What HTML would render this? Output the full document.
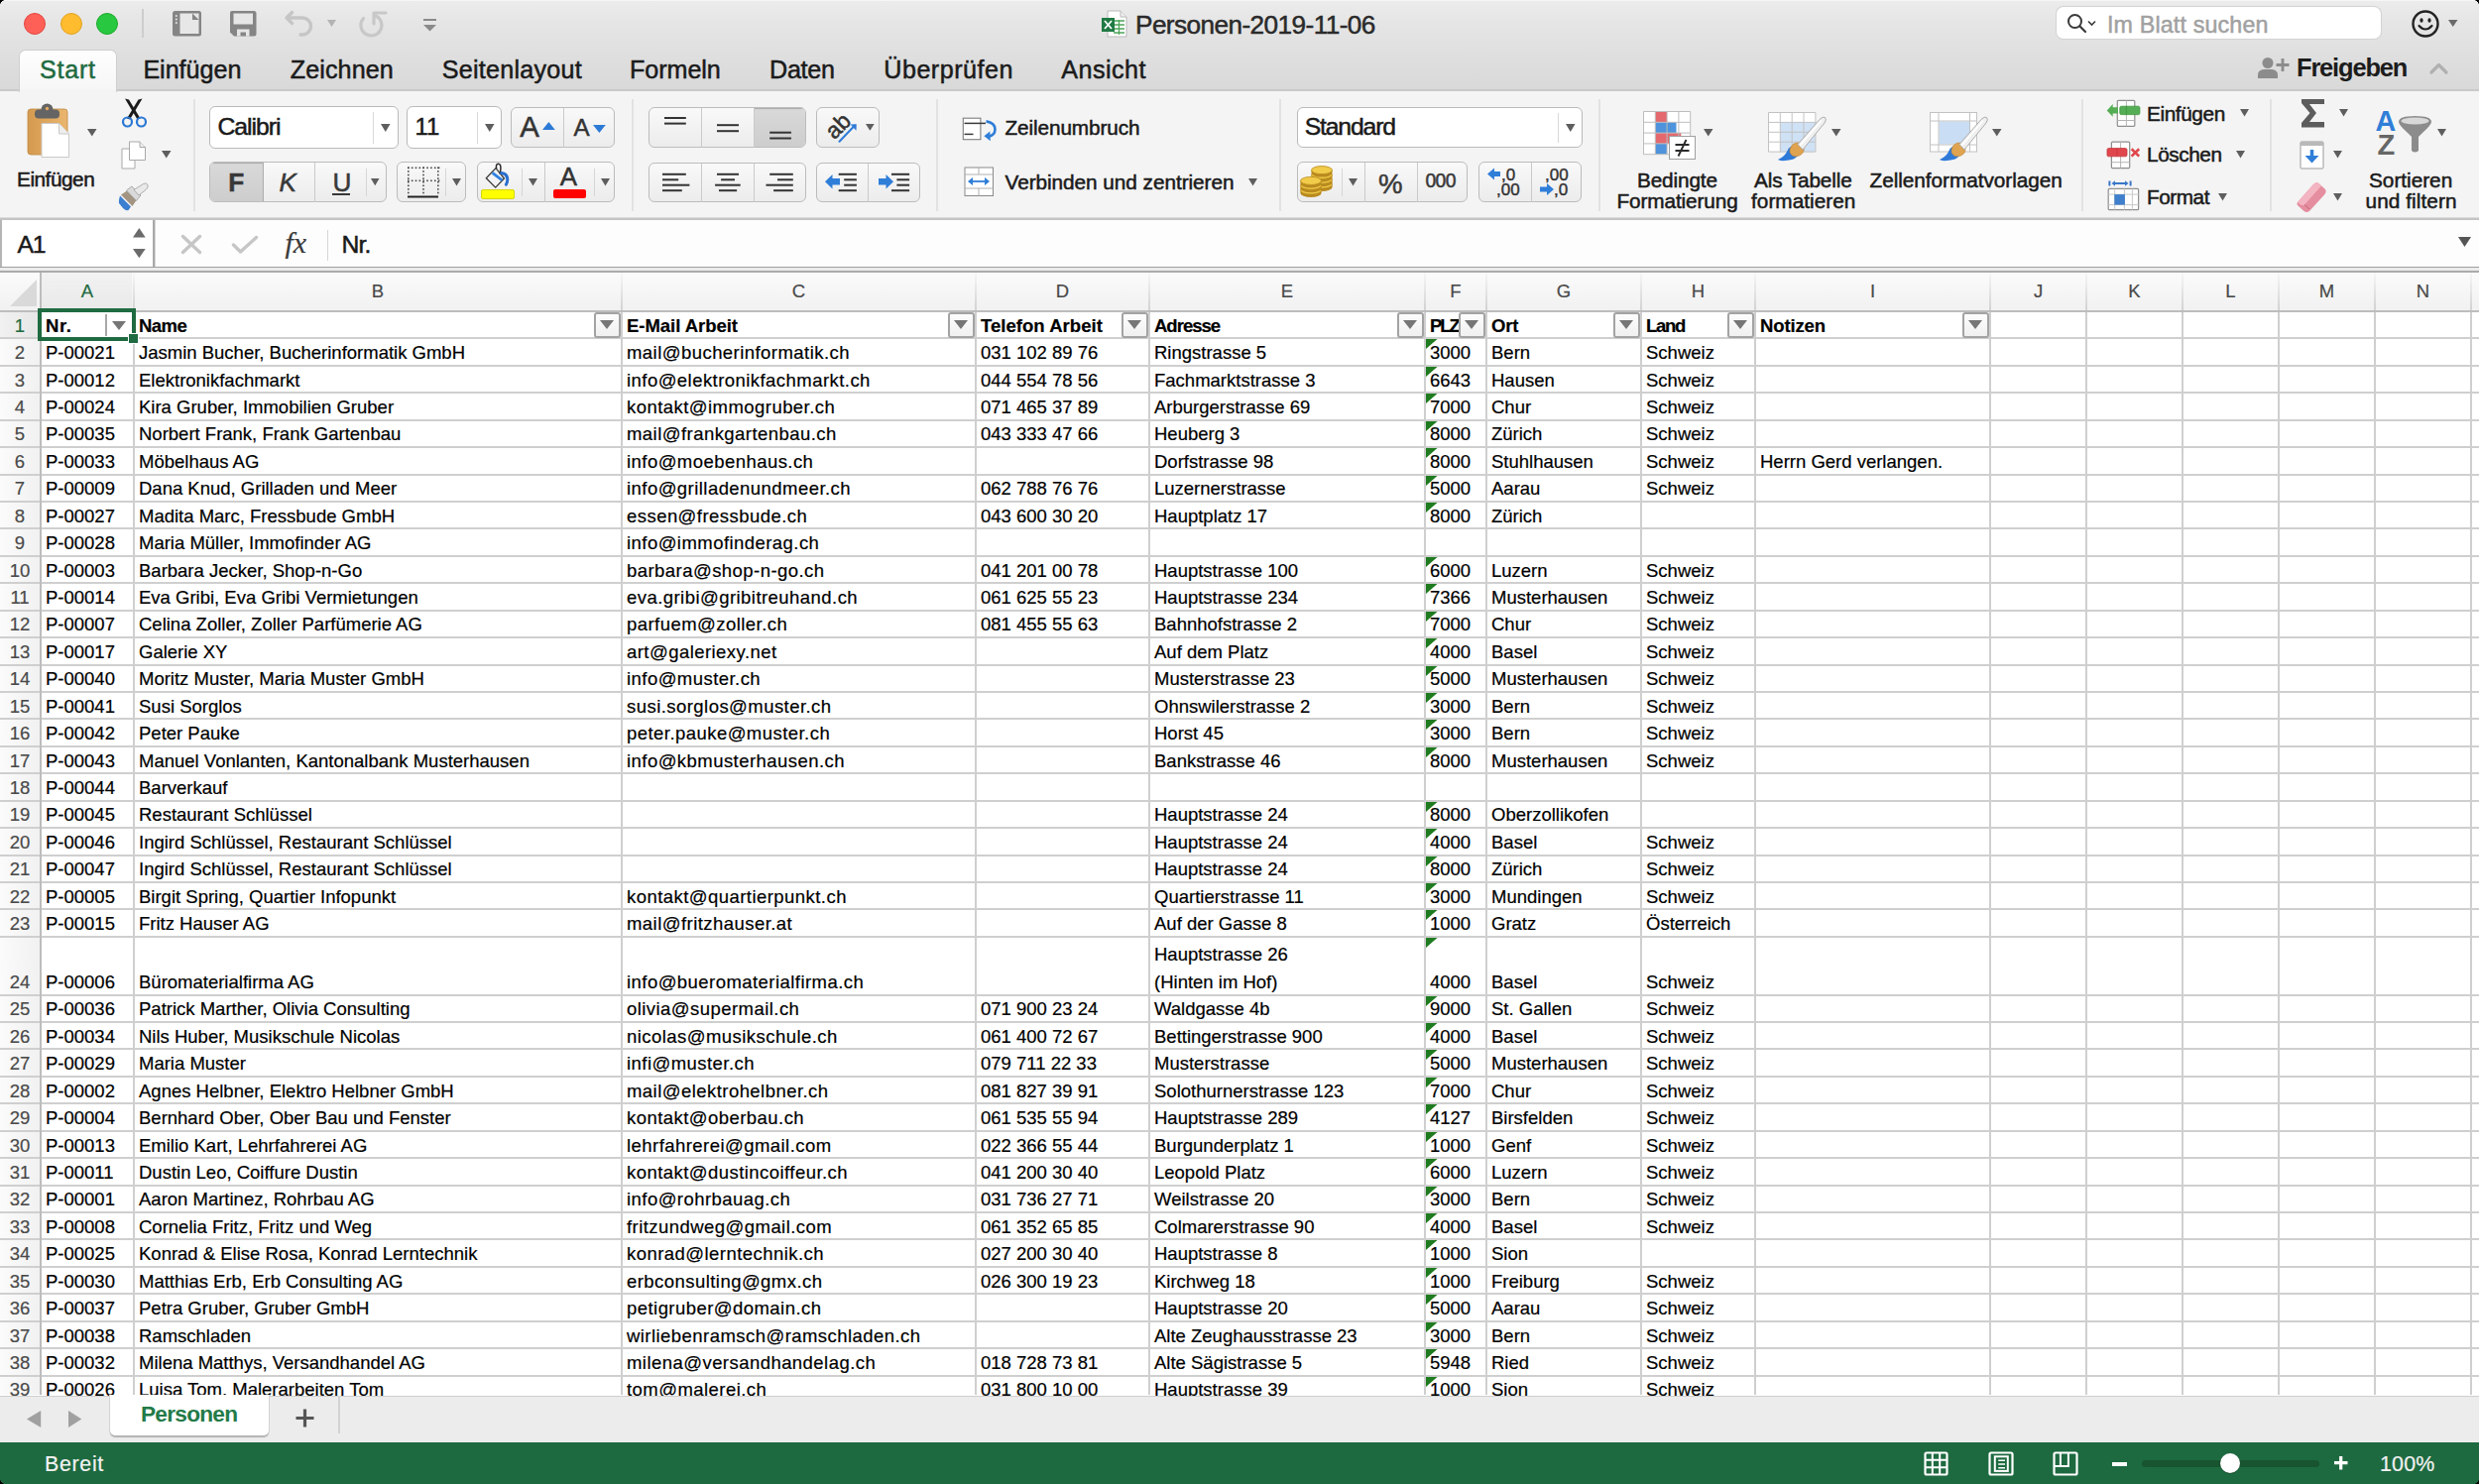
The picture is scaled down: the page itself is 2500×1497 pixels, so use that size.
<!DOCTYPE html>
<html><head><meta charset="utf-8"><title>Personen-2019-11-06</title>
<style>
html,body{margin:0;padding:0;}
body{width:2500px;height:1497px;position:relative;overflow:hidden;background:#fff;font-family:"Liberation Sans",sans-serif;}
.t{position:absolute;white-space:pre;line-height:1;font-family:"Liberation Sans",sans-serif;-webkit-text-stroke:0.5px currentColor;}
.c{-webkit-text-stroke:0.2px currentColor;}
svg{overflow:visible}
</style></head><body>
<div style="position:absolute;left:0px;top:0px;width:2500px;height:92px;background:linear-gradient(#ececec 0px,#e6e6e6 20px,#dedede 60px,#d9d9d9 91px);"></div>
<div style="position:absolute;left:0px;top:0px;width:2500px;height:1px;background:#f6f6f6;"></div>
<div style="position:absolute;left:0px;top:90px;width:2500px;height:2px;background:#c9c9c9;"></div>
<div style="position:absolute;left:0px;top:92px;width:2500px;height:128px;background:#f4f4f4;"></div>
<div style="position:absolute;left:0px;top:219px;width:2500px;height:1px;background:#dcdcdc;"></div>
<div style="position:absolute;left:0px;top:220px;width:2500px;height:2px;background:#c4c4c4;"></div>
<div style="position:absolute;left:0px;top:222px;width:2500px;height:47px;background:#fdfdfd;"></div>
<div style="position:absolute;left:0px;top:269px;width:2500px;height:1px;background:#9f9f9f;"></div>
<div style="position:absolute;left:0px;top:270px;width:2500px;height:3px;background:#ebebeb;"></div>
<div style="position:absolute;left:0px;top:273px;width:2500px;height:2px;background:#ababab;"></div>
<div style="position:absolute;left:24px;top:13px;width:20px;height:20px;border-radius:50%;background:#fe5f57;border:1px solid #e2463f;"></div>
<div style="position:absolute;left:60.5px;top:13px;width:20px;height:20px;border-radius:50%;background:#febc2e;border:1px solid #e1a325;"></div>
<div style="position:absolute;left:97px;top:13px;width:20px;height:20px;border-radius:50%;background:#28c840;border:1px solid #1aab29;"></div>
<div style="position:absolute;left:143px;top:9px;width:2px;height:29px;background:#cdcdcd;"></div>
<div style="position:absolute;left:20px;top:51px;width:97px;height:41px;background:linear-gradient(#fefefe,#f6f6f6);border-radius:6px 6px 0 0;box-shadow:0 0 0 1px #cfcfcf;"></div>
<div style="position:absolute;left:20px;top:90px;width:97px;height:3px;background:#f4f4f4;"></div>
<div class="t" style="left:40.0px;top:57.71px;font-size:25.15px;color:#1f6b41;letter-spacing:0.727px;">Start</div>
<div class="t" style="left:144.4px;top:57.71px;font-size:25.15px;color:#1a1a1a;letter-spacing:-0.036px;">Einfügen</div>
<div class="t" style="left:292.7px;top:57.71px;font-size:25.15px;color:#1a1a1a;letter-spacing:0.095px;">Zeichnen</div>
<div class="t" style="left:445.8px;top:57.71px;font-size:25.15px;color:#1a1a1a;letter-spacing:0.239px;">Seitenlayout</div>
<div class="t" style="left:635.0px;top:57.71px;font-size:25.15px;color:#1a1a1a;letter-spacing:-0.067px;">Formeln</div>
<div class="t" style="left:776.0px;top:57.71px;font-size:25.15px;color:#1a1a1a;letter-spacing:-0.273px;">Daten</div>
<div class="t" style="left:891.3px;top:57.71px;font-size:25.15px;color:#1a1a1a;letter-spacing:0.480px;">Überprüfen</div>
<div class="t" style="left:1070.3px;top:57.71px;font-size:25.15px;color:#1a1a1a;letter-spacing:0.458px;">Ansicht</div>
<div class="t" style="left:1145.0px;top:12.36px;font-size:26.16px;color:#2a2a2a;letter-spacing:-0.564px;">Personen-2019-11-06</div>
<div style="position:absolute;left:2074px;top:7px;width:327px;height:32px;background:#fff;border-radius:7px;box-shadow:0 0 0 1px #d3d3d3;"></div>
<div class="t" style="left:2125.0px;top:13.51px;font-size:23.26px;color:#a1a1a1;letter-spacing:0.154px;">Im Blatt suchen</div>
<div class="t" style="left:2316.0px;top:56.47px;font-size:25.44px;color:#1c1c1c;font-weight:700;letter-spacing:-1.158px;-webkit-text-stroke:0;">Freigeben</div>
<div class="t" style="left:17.0px;top:171.41px;font-size:20.78px;color:#1a1a1a;letter-spacing:-0.469px;">Einfügen</div>
<div class="t" style="left:1013.5px;top:119.41px;font-size:20.78px;color:#1a1a1a;letter-spacing:-0.105px;">Zeilenumbruch</div>
<div class="t" style="left:1013.5px;top:173.91px;font-size:20.78px;color:#1a1a1a;letter-spacing:-0.046px;">Verbinden und zentrieren</div>
<div class="t" style="left:1651.0px;top:171.61px;font-size:20.78px;color:#1a1a1a;letter-spacing:-0.141px;">Bedingte</div>
<div class="t" style="left:1630.5px;top:193.01px;font-size:20.78px;color:#1a1a1a;letter-spacing:-0.109px;">Formatierung</div>
<div class="t" style="left:1769.0px;top:171.61px;font-size:20.78px;color:#1a1a1a;letter-spacing:-0.125px;">Als Tabelle</div>
<div class="t" style="left:1766.0px;top:193.01px;font-size:20.78px;color:#1a1a1a;letter-spacing:0.037px;">formatieren</div>
<div class="t" style="left:1885.5px;top:171.71px;font-size:20.78px;color:#1a1a1a;letter-spacing:-0.041px;">Zellenformatvorlagen</div>
<div class="t" style="left:2165.0px;top:104.61px;font-size:20.78px;color:#1a1a1a;letter-spacing:-0.398px;">Einfügen</div>
<div class="t" style="left:2165.0px;top:146.41px;font-size:20.78px;color:#1a1a1a;letter-spacing:-0.419px;">Löschen</div>
<div class="t" style="left:2165.0px;top:188.61px;font-size:20.78px;color:#1a1a1a;letter-spacing:-0.473px;">Format</div>
<div class="t" style="left:2389.0px;top:172.41px;font-size:20.78px;color:#1a1a1a;letter-spacing:-0.008px;">Sortieren</div>
<div class="t" style="left:2385.5px;top:193.41px;font-size:20.78px;color:#1a1a1a;letter-spacing:0.080px;">und filtern</div>
<div style="position:absolute;left:0px;top:275px;width:2500px;height:1132px;background:#fff;"></div>
<div style="position:absolute;left:0px;top:275px;width:2500px;height:38px;background:linear-gradient(#fbfbfb,#f1f1f1);"></div>
<div style="position:absolute;left:42px;top:275px;width:91px;height:38px;background:linear-gradient(#f2f2f2,#e9e9e9);"></div>
<div style="position:absolute;left:0px;top:315px;width:40px;height:1092px;background:linear-gradient(90deg,#fbfbfb,#f1f1f1);"></div>
<div style="position:absolute;left:0px;top:315px;width:40px;height:25px;background:linear-gradient(90deg,#f1f1f1,#e6e6e6);"></div>
<svg style="position:absolute;left:10px;top:282px;" width="27" height="27" viewBox="0 0 27 27"><path d="M27 0 L27 27 L0 27 Z" fill="#d9d9d9"/></svg>
<div style="position:absolute;left:0;top:340px;width:2500px;height:2px;background:#cfcfcf"></div><div style="position:absolute;left:0;top:368px;width:2500px;height:2px;background:#cfcfcf"></div><div style="position:absolute;left:0;top:395px;width:2500px;height:2px;background:#cfcfcf"></div><div style="position:absolute;left:0;top:423px;width:2500px;height:2px;background:#cfcfcf"></div><div style="position:absolute;left:0;top:450px;width:2500px;height:2px;background:#cfcfcf"></div><div style="position:absolute;left:0;top:478px;width:2500px;height:2px;background:#cfcfcf"></div><div style="position:absolute;left:0;top:505px;width:2500px;height:2px;background:#cfcfcf"></div><div style="position:absolute;left:0;top:532px;width:2500px;height:2px;background:#cfcfcf"></div><div style="position:absolute;left:0;top:560px;width:2500px;height:2px;background:#cfcfcf"></div><div style="position:absolute;left:0;top:587px;width:2500px;height:2px;background:#cfcfcf"></div><div style="position:absolute;left:0;top:615px;width:2500px;height:2px;background:#cfcfcf"></div><div style="position:absolute;left:0;top:642px;width:2500px;height:2px;background:#cfcfcf"></div><div style="position:absolute;left:0;top:670px;width:2500px;height:2px;background:#cfcfcf"></div><div style="position:absolute;left:0;top:697px;width:2500px;height:2px;background:#cfcfcf"></div><div style="position:absolute;left:0;top:724px;width:2500px;height:2px;background:#cfcfcf"></div><div style="position:absolute;left:0;top:752px;width:2500px;height:2px;background:#cfcfcf"></div><div style="position:absolute;left:0;top:779px;width:2500px;height:2px;background:#cfcfcf"></div><div style="position:absolute;left:0;top:807px;width:2500px;height:2px;background:#cfcfcf"></div><div style="position:absolute;left:0;top:834px;width:2500px;height:2px;background:#cfcfcf"></div><div style="position:absolute;left:0;top:862px;width:2500px;height:2px;background:#cfcfcf"></div><div style="position:absolute;left:0;top:889px;width:2500px;height:2px;background:#cfcfcf"></div><div style="position:absolute;left:0;top:916px;width:2500px;height:2px;background:#cfcfcf"></div><div style="position:absolute;left:0;top:944px;width:2500px;height:2px;background:#cfcfcf"></div><div style="position:absolute;left:0;top:1003px;width:2500px;height:2px;background:#cfcfcf"></div><div style="position:absolute;left:0;top:1030px;width:2500px;height:2px;background:#cfcfcf"></div><div style="position:absolute;left:0;top:1057px;width:2500px;height:2px;background:#cfcfcf"></div><div style="position:absolute;left:0;top:1085px;width:2500px;height:2px;background:#cfcfcf"></div><div style="position:absolute;left:0;top:1112px;width:2500px;height:2px;background:#cfcfcf"></div><div style="position:absolute;left:0;top:1140px;width:2500px;height:2px;background:#cfcfcf"></div><div style="position:absolute;left:0;top:1167px;width:2500px;height:2px;background:#cfcfcf"></div><div style="position:absolute;left:0;top:1195px;width:2500px;height:2px;background:#cfcfcf"></div><div style="position:absolute;left:0;top:1222px;width:2500px;height:2px;background:#cfcfcf"></div><div style="position:absolute;left:0;top:1249px;width:2500px;height:2px;background:#cfcfcf"></div><div style="position:absolute;left:0;top:1277px;width:2500px;height:2px;background:#cfcfcf"></div><div style="position:absolute;left:0;top:1304px;width:2500px;height:2px;background:#cfcfcf"></div><div style="position:absolute;left:0;top:1332px;width:2500px;height:2px;background:#cfcfcf"></div><div style="position:absolute;left:0;top:1359px;width:2500px;height:2px;background:#cfcfcf"></div><div style="position:absolute;left:0;top:1387px;width:2500px;height:2px;background:#cfcfcf"></div>
<div style="position:absolute;left:0px;top:313px;width:2500px;height:2px;background:#bdbdbd;"></div>
<div style="position:absolute;left:40px;top:275px;width:2px;height:1132px;background:#bdbdbd;"></div>
<div style="position:absolute;left:134px;top:275px;width:2px;height:38px;background:linear-gradient(#f6f6f6,#d2d2d2);"></div>
<div style="position:absolute;left:134px;top:315px;width:2px;height:1092px;background:#cfcfcf;"></div>
<div style="position:absolute;left:626px;top:275px;width:2px;height:38px;background:linear-gradient(#f6f6f6,#d2d2d2);"></div>
<div style="position:absolute;left:626px;top:315px;width:2px;height:1092px;background:#cfcfcf;"></div>
<div style="position:absolute;left:983px;top:275px;width:2px;height:38px;background:linear-gradient(#f6f6f6,#d2d2d2);"></div>
<div style="position:absolute;left:983px;top:315px;width:2px;height:1092px;background:#cfcfcf;"></div>
<div style="position:absolute;left:1158px;top:275px;width:2px;height:38px;background:linear-gradient(#f6f6f6,#d2d2d2);"></div>
<div style="position:absolute;left:1158px;top:315px;width:2px;height:1092px;background:#cfcfcf;"></div>
<div style="position:absolute;left:1436px;top:275px;width:2px;height:38px;background:linear-gradient(#f6f6f6,#d2d2d2);"></div>
<div style="position:absolute;left:1436px;top:315px;width:2px;height:1092px;background:#cfcfcf;"></div>
<div style="position:absolute;left:1498px;top:275px;width:2px;height:38px;background:linear-gradient(#f6f6f6,#d2d2d2);"></div>
<div style="position:absolute;left:1498px;top:315px;width:2px;height:1092px;background:#cfcfcf;"></div>
<div style="position:absolute;left:1654px;top:275px;width:2px;height:38px;background:linear-gradient(#f6f6f6,#d2d2d2);"></div>
<div style="position:absolute;left:1654px;top:315px;width:2px;height:1092px;background:#cfcfcf;"></div>
<div style="position:absolute;left:1769px;top:275px;width:2px;height:38px;background:linear-gradient(#f6f6f6,#d2d2d2);"></div>
<div style="position:absolute;left:1769px;top:315px;width:2px;height:1092px;background:#cfcfcf;"></div>
<div style="position:absolute;left:2006px;top:275px;width:2px;height:38px;background:linear-gradient(#f6f6f6,#d2d2d2);"></div>
<div style="position:absolute;left:2006px;top:315px;width:2px;height:1092px;background:#cfcfcf;"></div>
<div style="position:absolute;left:2103px;top:275px;width:2px;height:38px;background:linear-gradient(#f6f6f6,#d2d2d2);"></div>
<div style="position:absolute;left:2103px;top:315px;width:2px;height:1092px;background:#cfcfcf;"></div>
<div style="position:absolute;left:2200px;top:275px;width:2px;height:38px;background:linear-gradient(#f6f6f6,#d2d2d2);"></div>
<div style="position:absolute;left:2200px;top:315px;width:2px;height:1092px;background:#cfcfcf;"></div>
<div style="position:absolute;left:2297px;top:275px;width:2px;height:38px;background:linear-gradient(#f6f6f6,#d2d2d2);"></div>
<div style="position:absolute;left:2297px;top:315px;width:2px;height:1092px;background:#cfcfcf;"></div>
<div style="position:absolute;left:2394px;top:275px;width:2px;height:38px;background:linear-gradient(#f6f6f6,#d2d2d2);"></div>
<div style="position:absolute;left:2394px;top:315px;width:2px;height:1092px;background:#cfcfcf;"></div>
<div style="position:absolute;left:2491px;top:275px;width:2px;height:38px;background:linear-gradient(#f6f6f6,#d2d2d2);"></div>
<div style="position:absolute;left:2491px;top:315px;width:2px;height:1092px;background:#cfcfcf;"></div>
<div class="t c" style="left:58.0px;width:60px;text-align:center;top:285.34px;font-size:18.5px;color:#1f6b41">A</div>
<div class="t c" style="left:351.0px;width:60px;text-align:center;top:285.34px;font-size:18.5px;color:#4a4a4a">B</div>
<div class="t c" style="left:775.5px;width:60px;text-align:center;top:285.34px;font-size:18.5px;color:#4a4a4a">C</div>
<div class="t c" style="left:1041.5px;width:60px;text-align:center;top:285.34px;font-size:18.5px;color:#4a4a4a">D</div>
<div class="t c" style="left:1268.0px;width:60px;text-align:center;top:285.34px;font-size:18.5px;color:#4a4a4a">E</div>
<div class="t c" style="left:1438.0px;width:60px;text-align:center;top:285.34px;font-size:18.5px;color:#4a4a4a">F</div>
<div class="t c" style="left:1547.0px;width:60px;text-align:center;top:285.34px;font-size:18.5px;color:#4a4a4a">G</div>
<div class="t c" style="left:1682.5px;width:60px;text-align:center;top:285.34px;font-size:18.5px;color:#4a4a4a">H</div>
<div class="t c" style="left:1858.5px;width:60px;text-align:center;top:285.34px;font-size:18.5px;color:#4a4a4a">I</div>
<div class="t c" style="left:2025.5px;width:60px;text-align:center;top:285.34px;font-size:18.5px;color:#4a4a4a">J</div>
<div class="t c" style="left:2122.5px;width:60px;text-align:center;top:285.34px;font-size:18.5px;color:#4a4a4a">K</div>
<div class="t c" style="left:2219.5px;width:60px;text-align:center;top:285.34px;font-size:18.5px;color:#4a4a4a">L</div>
<div class="t c" style="left:2316.5px;width:60px;text-align:center;top:285.34px;font-size:18.5px;color:#4a4a4a">M</div>
<div class="t c" style="left:2413.5px;width:60px;text-align:center;top:285.34px;font-size:18.5px;color:#4a4a4a">N</div>
<div class="t c" style="left:0px;width:40px;text-align:center;top:319.74px;font-size:18.5px;color:#1f6b41">1</div>
<div class="t c" style="left:0px;width:40px;text-align:center;top:347.17px;font-size:18.5px;color:#4a4a4a">2</div>
<div class="t c" style="left:0px;width:40px;text-align:center;top:374.60px;font-size:18.5px;color:#4a4a4a">3</div>
<div class="t c" style="left:0px;width:40px;text-align:center;top:402.03px;font-size:18.5px;color:#4a4a4a">4</div>
<div class="t c" style="left:0px;width:40px;text-align:center;top:429.46px;font-size:18.5px;color:#4a4a4a">5</div>
<div class="t c" style="left:0px;width:40px;text-align:center;top:456.89px;font-size:18.5px;color:#4a4a4a">6</div>
<div class="t c" style="left:0px;width:40px;text-align:center;top:484.32px;font-size:18.5px;color:#4a4a4a">7</div>
<div class="t c" style="left:0px;width:40px;text-align:center;top:511.75px;font-size:18.5px;color:#4a4a4a">8</div>
<div class="t c" style="left:0px;width:40px;text-align:center;top:539.18px;font-size:18.5px;color:#4a4a4a">9</div>
<div class="t c" style="left:0px;width:40px;text-align:center;top:566.61px;font-size:18.5px;color:#4a4a4a">10</div>
<div class="t c" style="left:0px;width:40px;text-align:center;top:594.04px;font-size:18.5px;color:#4a4a4a">11</div>
<div class="t c" style="left:0px;width:40px;text-align:center;top:621.47px;font-size:18.5px;color:#4a4a4a">12</div>
<div class="t c" style="left:0px;width:40px;text-align:center;top:648.90px;font-size:18.5px;color:#4a4a4a">13</div>
<div class="t c" style="left:0px;width:40px;text-align:center;top:676.33px;font-size:18.5px;color:#4a4a4a">14</div>
<div class="t c" style="left:0px;width:40px;text-align:center;top:703.76px;font-size:18.5px;color:#4a4a4a">15</div>
<div class="t c" style="left:0px;width:40px;text-align:center;top:731.19px;font-size:18.5px;color:#4a4a4a">16</div>
<div class="t c" style="left:0px;width:40px;text-align:center;top:758.62px;font-size:18.5px;color:#4a4a4a">17</div>
<div class="t c" style="left:0px;width:40px;text-align:center;top:786.05px;font-size:18.5px;color:#4a4a4a">18</div>
<div class="t c" style="left:0px;width:40px;text-align:center;top:813.48px;font-size:18.5px;color:#4a4a4a">19</div>
<div class="t c" style="left:0px;width:40px;text-align:center;top:840.91px;font-size:18.5px;color:#4a4a4a">20</div>
<div class="t c" style="left:0px;width:40px;text-align:center;top:868.34px;font-size:18.5px;color:#4a4a4a">21</div>
<div class="t c" style="left:0px;width:40px;text-align:center;top:895.77px;font-size:18.5px;color:#4a4a4a">22</div>
<div class="t c" style="left:0px;width:40px;text-align:center;top:923.20px;font-size:18.5px;color:#4a4a4a">23</div>
<div class="t c" style="left:0px;width:40px;text-align:center;top:981.94px;font-size:18.5px;color:#4a4a4a">24</div>
<div class="t c" style="left:0px;width:40px;text-align:center;top:1009.37px;font-size:18.5px;color:#4a4a4a">25</div>
<div class="t c" style="left:0px;width:40px;text-align:center;top:1036.80px;font-size:18.5px;color:#4a4a4a">26</div>
<div class="t c" style="left:0px;width:40px;text-align:center;top:1064.23px;font-size:18.5px;color:#4a4a4a">27</div>
<div class="t c" style="left:0px;width:40px;text-align:center;top:1091.66px;font-size:18.5px;color:#4a4a4a">28</div>
<div class="t c" style="left:0px;width:40px;text-align:center;top:1119.09px;font-size:18.5px;color:#4a4a4a">29</div>
<div class="t c" style="left:0px;width:40px;text-align:center;top:1146.52px;font-size:18.5px;color:#4a4a4a">30</div>
<div class="t c" style="left:0px;width:40px;text-align:center;top:1173.95px;font-size:18.5px;color:#4a4a4a">31</div>
<div class="t c" style="left:0px;width:40px;text-align:center;top:1201.38px;font-size:18.5px;color:#4a4a4a">32</div>
<div class="t c" style="left:0px;width:40px;text-align:center;top:1228.81px;font-size:18.5px;color:#4a4a4a">33</div>
<div class="t c" style="left:0px;width:40px;text-align:center;top:1256.24px;font-size:18.5px;color:#4a4a4a">34</div>
<div class="t c" style="left:0px;width:40px;text-align:center;top:1283.67px;font-size:18.5px;color:#4a4a4a">35</div>
<div class="t c" style="left:0px;width:40px;text-align:center;top:1311.10px;font-size:18.5px;color:#4a4a4a">36</div>
<div class="t c" style="left:0px;width:40px;text-align:center;top:1338.53px;font-size:18.5px;color:#4a4a4a">37</div>
<div class="t c" style="left:0px;width:40px;text-align:center;top:1365.96px;font-size:18.5px;color:#4a4a4a">38</div>
<div class="t c" style="left:0px;width:40px;text-align:center;top:1393.39px;font-size:18.5px;color:#4a4a4a">39</div>
<div class="t c" style="left:46px;top:319.74px;font-size:18.5px;color:#000;font-weight:700;letter-spacing:0.606px;">Nr.</div>
<div class="t c" style="left:140px;top:319.74px;font-size:18.5px;color:#000;font-weight:700;letter-spacing:-0.564px;">Name</div>
<div class="t c" style="left:632px;top:319.74px;font-size:18.5px;color:#000;font-weight:700;letter-spacing:-0.033px;">E-Mail Arbeit</div>
<div class="t c" style="left:989px;top:319.74px;font-size:18.5px;color:#000;font-weight:700;letter-spacing:0.037px;">Telefon Arbeit</div>
<div class="t c" style="left:1164px;top:319.74px;font-size:18.5px;color:#000;font-weight:700;letter-spacing:-0.986px;">Adresse</div>
<div class="t c" style="left:1442px;top:319.74px;font-size:18.5px;color:#000;font-weight:700;letter-spacing:-2.027px;">PLZ</div>
<div class="t c" style="left:1504px;top:319.74px;font-size:18.5px;color:#000;font-weight:700;letter-spacing:-0.175px;">Ort</div>
<div class="t c" style="left:1660px;top:319.74px;font-size:18.5px;color:#000;font-weight:700;letter-spacing:-1.334px;">Land</div>
<div class="t c" style="left:1775px;top:319.74px;font-size:18.5px;color:#000;font-weight:700;letter-spacing:-0.119px;">Notizen</div>
<div class="t c" style="left:46px;top:347.17px;font-size:18.5px;color:#000;">P-00021</div>
<div class="t c" style="left:140px;top:347.17px;font-size:18.5px;color:#000;">Jasmin Bucher, Bucherinformatik GmbH</div>
<div class="t c" style="left:632px;top:347.17px;font-size:18.5px;color:#000;letter-spacing:0.45px;">mail@bucherinformatik.ch</div>
<div class="t c" style="left:989px;top:347.17px;font-size:18.5px;color:#000;">031 102 89 76</div>
<div class="t c" style="left:1164px;top:347.17px;font-size:18.5px;color:#000;">Ringstrasse 5</div>
<div class="t c" style="left:1442px;top:347.17px;font-size:18.5px;color:#000;">3000</div>
<div class="t c" style="left:1504px;top:347.17px;font-size:18.5px;color:#000;">Bern</div>
<div class="t c" style="left:1660px;top:347.17px;font-size:18.5px;color:#000;">Schweiz</div>
<svg style="position:absolute;left:1438px;top:342px" width="12" height="10"><path d="M0 0 L11.5 0 L0 10 Z" fill="#1f7b1f"/></svg>
<div class="t c" style="left:46px;top:374.60px;font-size:18.5px;color:#000;">P-00012</div>
<div class="t c" style="left:140px;top:374.60px;font-size:18.5px;color:#000;">Elektronikfachmarkt</div>
<div class="t c" style="left:632px;top:374.60px;font-size:18.5px;color:#000;letter-spacing:0.45px;">info@elektronikfachmarkt.ch</div>
<div class="t c" style="left:989px;top:374.60px;font-size:18.5px;color:#000;">044 554 78 56</div>
<div class="t c" style="left:1164px;top:374.60px;font-size:18.5px;color:#000;">Fachmarktstrasse 3</div>
<div class="t c" style="left:1442px;top:374.60px;font-size:18.5px;color:#000;">6643</div>
<div class="t c" style="left:1504px;top:374.60px;font-size:18.5px;color:#000;">Hausen</div>
<div class="t c" style="left:1660px;top:374.60px;font-size:18.5px;color:#000;">Schweiz</div>
<svg style="position:absolute;left:1438px;top:370px" width="12" height="10"><path d="M0 0 L11.5 0 L0 10 Z" fill="#1f7b1f"/></svg>
<div class="t c" style="left:46px;top:402.03px;font-size:18.5px;color:#000;">P-00024</div>
<div class="t c" style="left:140px;top:402.03px;font-size:18.5px;color:#000;">Kira Gruber, Immobilien Gruber</div>
<div class="t c" style="left:632px;top:402.03px;font-size:18.5px;color:#000;letter-spacing:0.45px;">kontakt@immogruber.ch</div>
<div class="t c" style="left:989px;top:402.03px;font-size:18.5px;color:#000;">071 465 37 89</div>
<div class="t c" style="left:1164px;top:402.03px;font-size:18.5px;color:#000;">Arburgerstrasse 69</div>
<div class="t c" style="left:1442px;top:402.03px;font-size:18.5px;color:#000;">7000</div>
<div class="t c" style="left:1504px;top:402.03px;font-size:18.5px;color:#000;">Chur</div>
<div class="t c" style="left:1660px;top:402.03px;font-size:18.5px;color:#000;">Schweiz</div>
<svg style="position:absolute;left:1438px;top:397px" width="12" height="10"><path d="M0 0 L11.5 0 L0 10 Z" fill="#1f7b1f"/></svg>
<div class="t c" style="left:46px;top:429.46px;font-size:18.5px;color:#000;">P-00035</div>
<div class="t c" style="left:140px;top:429.46px;font-size:18.5px;color:#000;">Norbert Frank, Frank Gartenbau</div>
<div class="t c" style="left:632px;top:429.46px;font-size:18.5px;color:#000;letter-spacing:0.45px;">mail@frankgartenbau.ch</div>
<div class="t c" style="left:989px;top:429.46px;font-size:18.5px;color:#000;">043 333 47 66</div>
<div class="t c" style="left:1164px;top:429.46px;font-size:18.5px;color:#000;">Heuberg 3</div>
<div class="t c" style="left:1442px;top:429.46px;font-size:18.5px;color:#000;">8000</div>
<div class="t c" style="left:1504px;top:429.46px;font-size:18.5px;color:#000;">Zürich</div>
<div class="t c" style="left:1660px;top:429.46px;font-size:18.5px;color:#000;">Schweiz</div>
<svg style="position:absolute;left:1438px;top:425px" width="12" height="10"><path d="M0 0 L11.5 0 L0 10 Z" fill="#1f7b1f"/></svg>
<div class="t c" style="left:46px;top:456.89px;font-size:18.5px;color:#000;">P-00033</div>
<div class="t c" style="left:140px;top:456.89px;font-size:18.5px;color:#000;">Möbelhaus AG</div>
<div class="t c" style="left:632px;top:456.89px;font-size:18.5px;color:#000;letter-spacing:0.45px;">info@moebenhaus.ch</div>
<div class="t c" style="left:1164px;top:456.89px;font-size:18.5px;color:#000;">Dorfstrasse 98</div>
<div class="t c" style="left:1442px;top:456.89px;font-size:18.5px;color:#000;">8000</div>
<div class="t c" style="left:1504px;top:456.89px;font-size:18.5px;color:#000;">Stuhlhausen</div>
<div class="t c" style="left:1660px;top:456.89px;font-size:18.5px;color:#000;">Schweiz</div>
<div class="t c" style="left:1775px;top:456.89px;font-size:18.5px;color:#000;">Herrn Gerd verlangen.</div>
<svg style="position:absolute;left:1438px;top:452px" width="12" height="10"><path d="M0 0 L11.5 0 L0 10 Z" fill="#1f7b1f"/></svg>
<div class="t c" style="left:46px;top:484.32px;font-size:18.5px;color:#000;">P-00009</div>
<div class="t c" style="left:140px;top:484.32px;font-size:18.5px;color:#000;">Dana Knud, Grilladen und Meer</div>
<div class="t c" style="left:632px;top:484.32px;font-size:18.5px;color:#000;letter-spacing:0.45px;">info@grilladenundmeer.ch</div>
<div class="t c" style="left:989px;top:484.32px;font-size:18.5px;color:#000;">062 788 76 76</div>
<div class="t c" style="left:1164px;top:484.32px;font-size:18.5px;color:#000;">Luzernerstrasse</div>
<div class="t c" style="left:1442px;top:484.32px;font-size:18.5px;color:#000;">5000</div>
<div class="t c" style="left:1504px;top:484.32px;font-size:18.5px;color:#000;">Aarau</div>
<div class="t c" style="left:1660px;top:484.32px;font-size:18.5px;color:#000;">Schweiz</div>
<svg style="position:absolute;left:1438px;top:480px" width="12" height="10"><path d="M0 0 L11.5 0 L0 10 Z" fill="#1f7b1f"/></svg>
<div class="t c" style="left:46px;top:511.75px;font-size:18.5px;color:#000;">P-00027</div>
<div class="t c" style="left:140px;top:511.75px;font-size:18.5px;color:#000;">Madita Marc, Fressbude GmbH</div>
<div class="t c" style="left:632px;top:511.75px;font-size:18.5px;color:#000;letter-spacing:0.45px;">essen@fressbude.ch</div>
<div class="t c" style="left:989px;top:511.75px;font-size:18.5px;color:#000;">043 600 30 20</div>
<div class="t c" style="left:1164px;top:511.75px;font-size:18.5px;color:#000;">Hauptplatz 17</div>
<div class="t c" style="left:1442px;top:511.75px;font-size:18.5px;color:#000;">8000</div>
<div class="t c" style="left:1504px;top:511.75px;font-size:18.5px;color:#000;">Zürich</div>
<svg style="position:absolute;left:1438px;top:507px" width="12" height="10"><path d="M0 0 L11.5 0 L0 10 Z" fill="#1f7b1f"/></svg>
<div class="t c" style="left:46px;top:539.18px;font-size:18.5px;color:#000;">P-00028</div>
<div class="t c" style="left:140px;top:539.18px;font-size:18.5px;color:#000;">Maria Müller, Immofinder AG</div>
<div class="t c" style="left:632px;top:539.18px;font-size:18.5px;color:#000;letter-spacing:0.45px;">info@immofinderag.ch</div>
<div class="t c" style="left:46px;top:566.61px;font-size:18.5px;color:#000;">P-00003</div>
<div class="t c" style="left:140px;top:566.61px;font-size:18.5px;color:#000;">Barbara Jecker, Shop-n-Go</div>
<div class="t c" style="left:632px;top:566.61px;font-size:18.5px;color:#000;letter-spacing:0.45px;">barbara@shop-n-go.ch</div>
<div class="t c" style="left:989px;top:566.61px;font-size:18.5px;color:#000;">041 201 00 78</div>
<div class="t c" style="left:1164px;top:566.61px;font-size:18.5px;color:#000;">Hauptstrasse 100</div>
<div class="t c" style="left:1442px;top:566.61px;font-size:18.5px;color:#000;">6000</div>
<div class="t c" style="left:1504px;top:566.61px;font-size:18.5px;color:#000;">Luzern</div>
<div class="t c" style="left:1660px;top:566.61px;font-size:18.5px;color:#000;">Schweiz</div>
<svg style="position:absolute;left:1438px;top:562px" width="12" height="10"><path d="M0 0 L11.5 0 L0 10 Z" fill="#1f7b1f"/></svg>
<div class="t c" style="left:46px;top:594.04px;font-size:18.5px;color:#000;">P-00014</div>
<div class="t c" style="left:140px;top:594.04px;font-size:18.5px;color:#000;">Eva Gribi, Eva Gribi Vermietungen</div>
<div class="t c" style="left:632px;top:594.04px;font-size:18.5px;color:#000;letter-spacing:0.45px;">eva.gribi@gribitreuhand.ch</div>
<div class="t c" style="left:989px;top:594.04px;font-size:18.5px;color:#000;">061 625 55 23</div>
<div class="t c" style="left:1164px;top:594.04px;font-size:18.5px;color:#000;">Hauptstrasse 234</div>
<div class="t c" style="left:1442px;top:594.04px;font-size:18.5px;color:#000;">7366</div>
<div class="t c" style="left:1504px;top:594.04px;font-size:18.5px;color:#000;">Musterhausen</div>
<div class="t c" style="left:1660px;top:594.04px;font-size:18.5px;color:#000;">Schweiz</div>
<svg style="position:absolute;left:1438px;top:589px" width="12" height="10"><path d="M0 0 L11.5 0 L0 10 Z" fill="#1f7b1f"/></svg>
<div class="t c" style="left:46px;top:621.47px;font-size:18.5px;color:#000;">P-00007</div>
<div class="t c" style="left:140px;top:621.47px;font-size:18.5px;color:#000;">Celina Zoller, Zoller Parfümerie AG</div>
<div class="t c" style="left:632px;top:621.47px;font-size:18.5px;color:#000;letter-spacing:0.45px;">parfuem@zoller.ch</div>
<div class="t c" style="left:989px;top:621.47px;font-size:18.5px;color:#000;">081 455 55 63</div>
<div class="t c" style="left:1164px;top:621.47px;font-size:18.5px;color:#000;">Bahnhofstrasse 2</div>
<div class="t c" style="left:1442px;top:621.47px;font-size:18.5px;color:#000;">7000</div>
<div class="t c" style="left:1504px;top:621.47px;font-size:18.5px;color:#000;">Chur</div>
<div class="t c" style="left:1660px;top:621.47px;font-size:18.5px;color:#000;">Schweiz</div>
<svg style="position:absolute;left:1438px;top:617px" width="12" height="10"><path d="M0 0 L11.5 0 L0 10 Z" fill="#1f7b1f"/></svg>
<div class="t c" style="left:46px;top:648.90px;font-size:18.5px;color:#000;">P-00017</div>
<div class="t c" style="left:140px;top:648.90px;font-size:18.5px;color:#000;">Galerie XY</div>
<div class="t c" style="left:632px;top:648.90px;font-size:18.5px;color:#000;letter-spacing:0.45px;">art@galeriexy.net</div>
<div class="t c" style="left:1164px;top:648.90px;font-size:18.5px;color:#000;">Auf dem Platz</div>
<div class="t c" style="left:1442px;top:648.90px;font-size:18.5px;color:#000;">4000</div>
<div class="t c" style="left:1504px;top:648.90px;font-size:18.5px;color:#000;">Basel</div>
<div class="t c" style="left:1660px;top:648.90px;font-size:18.5px;color:#000;">Schweiz</div>
<svg style="position:absolute;left:1438px;top:644px" width="12" height="10"><path d="M0 0 L11.5 0 L0 10 Z" fill="#1f7b1f"/></svg>
<div class="t c" style="left:46px;top:676.33px;font-size:18.5px;color:#000;">P-00040</div>
<div class="t c" style="left:140px;top:676.33px;font-size:18.5px;color:#000;">Moritz Muster, Maria Muster GmbH</div>
<div class="t c" style="left:632px;top:676.33px;font-size:18.5px;color:#000;letter-spacing:0.45px;">info@muster.ch</div>
<div class="t c" style="left:1164px;top:676.33px;font-size:18.5px;color:#000;">Musterstrasse 23</div>
<div class="t c" style="left:1442px;top:676.33px;font-size:18.5px;color:#000;">5000</div>
<div class="t c" style="left:1504px;top:676.33px;font-size:18.5px;color:#000;">Musterhausen</div>
<div class="t c" style="left:1660px;top:676.33px;font-size:18.5px;color:#000;">Schweiz</div>
<svg style="position:absolute;left:1438px;top:672px" width="12" height="10"><path d="M0 0 L11.5 0 L0 10 Z" fill="#1f7b1f"/></svg>
<div class="t c" style="left:46px;top:703.76px;font-size:18.5px;color:#000;">P-00041</div>
<div class="t c" style="left:140px;top:703.76px;font-size:18.5px;color:#000;">Susi Sorglos</div>
<div class="t c" style="left:632px;top:703.76px;font-size:18.5px;color:#000;letter-spacing:0.45px;">susi.sorglos@muster.ch</div>
<div class="t c" style="left:1164px;top:703.76px;font-size:18.5px;color:#000;">Ohnswilerstrasse 2</div>
<div class="t c" style="left:1442px;top:703.76px;font-size:18.5px;color:#000;">3000</div>
<div class="t c" style="left:1504px;top:703.76px;font-size:18.5px;color:#000;">Bern</div>
<div class="t c" style="left:1660px;top:703.76px;font-size:18.5px;color:#000;">Schweiz</div>
<svg style="position:absolute;left:1438px;top:699px" width="12" height="10"><path d="M0 0 L11.5 0 L0 10 Z" fill="#1f7b1f"/></svg>
<div class="t c" style="left:46px;top:731.19px;font-size:18.5px;color:#000;">P-00042</div>
<div class="t c" style="left:140px;top:731.19px;font-size:18.5px;color:#000;">Peter Pauke</div>
<div class="t c" style="left:632px;top:731.19px;font-size:18.5px;color:#000;letter-spacing:0.45px;">peter.pauke@muster.ch</div>
<div class="t c" style="left:1164px;top:731.19px;font-size:18.5px;color:#000;">Horst 45</div>
<div class="t c" style="left:1442px;top:731.19px;font-size:18.5px;color:#000;">3000</div>
<div class="t c" style="left:1504px;top:731.19px;font-size:18.5px;color:#000;">Bern</div>
<div class="t c" style="left:1660px;top:731.19px;font-size:18.5px;color:#000;">Schweiz</div>
<svg style="position:absolute;left:1438px;top:726px" width="12" height="10"><path d="M0 0 L11.5 0 L0 10 Z" fill="#1f7b1f"/></svg>
<div class="t c" style="left:46px;top:758.62px;font-size:18.5px;color:#000;">P-00043</div>
<div class="t c" style="left:140px;top:758.62px;font-size:18.5px;color:#000;">Manuel Vonlanten, Kantonalbank Musterhausen</div>
<div class="t c" style="left:632px;top:758.62px;font-size:18.5px;color:#000;letter-spacing:0.45px;">info@kbmusterhausen.ch</div>
<div class="t c" style="left:1164px;top:758.62px;font-size:18.5px;color:#000;">Bankstrasse 46</div>
<div class="t c" style="left:1442px;top:758.62px;font-size:18.5px;color:#000;">8000</div>
<div class="t c" style="left:1504px;top:758.62px;font-size:18.5px;color:#000;">Musterhausen</div>
<div class="t c" style="left:1660px;top:758.62px;font-size:18.5px;color:#000;">Schweiz</div>
<svg style="position:absolute;left:1438px;top:754px" width="12" height="10"><path d="M0 0 L11.5 0 L0 10 Z" fill="#1f7b1f"/></svg>
<div class="t c" style="left:46px;top:786.05px;font-size:18.5px;color:#000;">P-00044</div>
<div class="t c" style="left:140px;top:786.05px;font-size:18.5px;color:#000;">Barverkauf</div>
<div class="t c" style="left:46px;top:813.48px;font-size:18.5px;color:#000;">P-00045</div>
<div class="t c" style="left:140px;top:813.48px;font-size:18.5px;color:#000;">Restaurant Schlüssel</div>
<div class="t c" style="left:1164px;top:813.48px;font-size:18.5px;color:#000;">Hauptstrasse 24</div>
<div class="t c" style="left:1442px;top:813.48px;font-size:18.5px;color:#000;">8000</div>
<div class="t c" style="left:1504px;top:813.48px;font-size:18.5px;color:#000;">Oberzollikofen</div>
<svg style="position:absolute;left:1438px;top:809px" width="12" height="10"><path d="M0 0 L11.5 0 L0 10 Z" fill="#1f7b1f"/></svg>
<div class="t c" style="left:46px;top:840.91px;font-size:18.5px;color:#000;">P-00046</div>
<div class="t c" style="left:140px;top:840.91px;font-size:18.5px;color:#000;">Ingird Schlüssel, Restaurant Schlüssel</div>
<div class="t c" style="left:1164px;top:840.91px;font-size:18.5px;color:#000;">Hauptstrasse 24</div>
<div class="t c" style="left:1442px;top:840.91px;font-size:18.5px;color:#000;">4000</div>
<div class="t c" style="left:1504px;top:840.91px;font-size:18.5px;color:#000;">Basel</div>
<div class="t c" style="left:1660px;top:840.91px;font-size:18.5px;color:#000;">Schweiz</div>
<svg style="position:absolute;left:1438px;top:836px" width="12" height="10"><path d="M0 0 L11.5 0 L0 10 Z" fill="#1f7b1f"/></svg>
<div class="t c" style="left:46px;top:868.34px;font-size:18.5px;color:#000;">P-00047</div>
<div class="t c" style="left:140px;top:868.34px;font-size:18.5px;color:#000;">Ingird Schlüssel, Restaurant Schlüssel</div>
<div class="t c" style="left:1164px;top:868.34px;font-size:18.5px;color:#000;">Hauptstrasse 24</div>
<div class="t c" style="left:1442px;top:868.34px;font-size:18.5px;color:#000;">8000</div>
<div class="t c" style="left:1504px;top:868.34px;font-size:18.5px;color:#000;">Zürich</div>
<div class="t c" style="left:1660px;top:868.34px;font-size:18.5px;color:#000;">Schweiz</div>
<svg style="position:absolute;left:1438px;top:864px" width="12" height="10"><path d="M0 0 L11.5 0 L0 10 Z" fill="#1f7b1f"/></svg>
<div class="t c" style="left:46px;top:895.77px;font-size:18.5px;color:#000;">P-00005</div>
<div class="t c" style="left:140px;top:895.77px;font-size:18.5px;color:#000;">Birgit Spring, Quartier Infopunkt</div>
<div class="t c" style="left:632px;top:895.77px;font-size:18.5px;color:#000;letter-spacing:0.45px;">kontakt@quartierpunkt.ch</div>
<div class="t c" style="left:1164px;top:895.77px;font-size:18.5px;color:#000;">Quartierstrasse 11</div>
<div class="t c" style="left:1442px;top:895.77px;font-size:18.5px;color:#000;">3000</div>
<div class="t c" style="left:1504px;top:895.77px;font-size:18.5px;color:#000;">Mundingen</div>
<div class="t c" style="left:1660px;top:895.77px;font-size:18.5px;color:#000;">Schweiz</div>
<svg style="position:absolute;left:1438px;top:891px" width="12" height="10"><path d="M0 0 L11.5 0 L0 10 Z" fill="#1f7b1f"/></svg>
<div class="t c" style="left:46px;top:923.20px;font-size:18.5px;color:#000;">P-00015</div>
<div class="t c" style="left:140px;top:923.20px;font-size:18.5px;color:#000;">Fritz Hauser AG</div>
<div class="t c" style="left:632px;top:923.20px;font-size:18.5px;color:#000;letter-spacing:0.45px;">mail@fritzhauser.at</div>
<div class="t c" style="left:1164px;top:923.20px;font-size:18.5px;color:#000;">Auf der Gasse 8</div>
<div class="t c" style="left:1442px;top:923.20px;font-size:18.5px;color:#000;">1000</div>
<div class="t c" style="left:1504px;top:923.20px;font-size:18.5px;color:#000;">Gratz</div>
<div class="t c" style="left:1660px;top:923.20px;font-size:18.5px;color:#000;">Österreich</div>
<svg style="position:absolute;left:1438px;top:918px" width="12" height="10"><path d="M0 0 L11.5 0 L0 10 Z" fill="#1f7b1f"/></svg>
<div class="t c" style="left:46px;top:981.94px;font-size:18.5px;color:#000;">P-00006</div>
<div class="t c" style="left:140px;top:981.94px;font-size:18.5px;color:#000;">Büromaterialfirma AG</div>
<div class="t c" style="left:632px;top:981.94px;font-size:18.5px;color:#000;letter-spacing:0.45px;">info@bueromaterialfirma.ch</div>
<div class="t c" style="left:1164px;top:954.44px;font-size:18.5px;color:#000;">Hauptstrasse 26</div>
<div class="t c" style="left:1164px;top:981.94px;font-size:18.5px;color:#000;">(Hinten im Hof)</div>
<div class="t c" style="left:1442px;top:981.94px;font-size:18.5px;color:#000;">4000</div>
<div class="t c" style="left:1504px;top:981.94px;font-size:18.5px;color:#000;">Basel</div>
<div class="t c" style="left:1660px;top:981.94px;font-size:18.5px;color:#000;">Schweiz</div>
<svg style="position:absolute;left:1438px;top:946px" width="12" height="10"><path d="M0 0 L11.5 0 L0 10 Z" fill="#1f7b1f"/></svg>
<div class="t c" style="left:46px;top:1009.37px;font-size:18.5px;color:#000;">P-00036</div>
<div class="t c" style="left:140px;top:1009.37px;font-size:18.5px;color:#000;">Patrick Marther, Olivia Consulting</div>
<div class="t c" style="left:632px;top:1009.37px;font-size:18.5px;color:#000;letter-spacing:0.45px;">olivia@supermail.ch</div>
<div class="t c" style="left:989px;top:1009.37px;font-size:18.5px;color:#000;">071 900 23 24</div>
<div class="t c" style="left:1164px;top:1009.37px;font-size:18.5px;color:#000;">Waldgasse 4b</div>
<div class="t c" style="left:1442px;top:1009.37px;font-size:18.5px;color:#000;">9000</div>
<div class="t c" style="left:1504px;top:1009.37px;font-size:18.5px;color:#000;">St. Gallen</div>
<div class="t c" style="left:1660px;top:1009.37px;font-size:18.5px;color:#000;">Schweiz</div>
<svg style="position:absolute;left:1438px;top:1005px" width="12" height="10"><path d="M0 0 L11.5 0 L0 10 Z" fill="#1f7b1f"/></svg>
<div class="t c" style="left:46px;top:1036.80px;font-size:18.5px;color:#000;">P-00034</div>
<div class="t c" style="left:140px;top:1036.80px;font-size:18.5px;color:#000;">Nils Huber, Musikschule Nicolas</div>
<div class="t c" style="left:632px;top:1036.80px;font-size:18.5px;color:#000;letter-spacing:0.45px;">nicolas@musikschule.ch</div>
<div class="t c" style="left:989px;top:1036.80px;font-size:18.5px;color:#000;">061 400 72 67</div>
<div class="t c" style="left:1164px;top:1036.80px;font-size:18.5px;color:#000;">Bettingerstrasse 900</div>
<div class="t c" style="left:1442px;top:1036.80px;font-size:18.5px;color:#000;">4000</div>
<div class="t c" style="left:1504px;top:1036.80px;font-size:18.5px;color:#000;">Basel</div>
<div class="t c" style="left:1660px;top:1036.80px;font-size:18.5px;color:#000;">Schweiz</div>
<svg style="position:absolute;left:1438px;top:1032px" width="12" height="10"><path d="M0 0 L11.5 0 L0 10 Z" fill="#1f7b1f"/></svg>
<div class="t c" style="left:46px;top:1064.23px;font-size:18.5px;color:#000;">P-00029</div>
<div class="t c" style="left:140px;top:1064.23px;font-size:18.5px;color:#000;">Maria Muster</div>
<div class="t c" style="left:632px;top:1064.23px;font-size:18.5px;color:#000;letter-spacing:0.45px;">infi@muster.ch</div>
<div class="t c" style="left:989px;top:1064.23px;font-size:18.5px;color:#000;">079 711 22 33</div>
<div class="t c" style="left:1164px;top:1064.23px;font-size:18.5px;color:#000;">Musterstrasse</div>
<div class="t c" style="left:1442px;top:1064.23px;font-size:18.5px;color:#000;">5000</div>
<div class="t c" style="left:1504px;top:1064.23px;font-size:18.5px;color:#000;">Musterhausen</div>
<div class="t c" style="left:1660px;top:1064.23px;font-size:18.5px;color:#000;">Schweiz</div>
<svg style="position:absolute;left:1438px;top:1059px" width="12" height="10"><path d="M0 0 L11.5 0 L0 10 Z" fill="#1f7b1f"/></svg>
<div class="t c" style="left:46px;top:1091.66px;font-size:18.5px;color:#000;">P-00002</div>
<div class="t c" style="left:140px;top:1091.66px;font-size:18.5px;color:#000;">Agnes Helbner, Elektro Helbner GmbH</div>
<div class="t c" style="left:632px;top:1091.66px;font-size:18.5px;color:#000;letter-spacing:0.45px;">mail@elektrohelbner.ch</div>
<div class="t c" style="left:989px;top:1091.66px;font-size:18.5px;color:#000;">081 827 39 91</div>
<div class="t c" style="left:1164px;top:1091.66px;font-size:18.5px;color:#000;">Solothurnerstrasse 123</div>
<div class="t c" style="left:1442px;top:1091.66px;font-size:18.5px;color:#000;">7000</div>
<div class="t c" style="left:1504px;top:1091.66px;font-size:18.5px;color:#000;">Chur</div>
<div class="t c" style="left:1660px;top:1091.66px;font-size:18.5px;color:#000;">Schweiz</div>
<svg style="position:absolute;left:1438px;top:1087px" width="12" height="10"><path d="M0 0 L11.5 0 L0 10 Z" fill="#1f7b1f"/></svg>
<div class="t c" style="left:46px;top:1119.09px;font-size:18.5px;color:#000;">P-00004</div>
<div class="t c" style="left:140px;top:1119.09px;font-size:18.5px;color:#000;">Bernhard Ober, Ober Bau und Fenster</div>
<div class="t c" style="left:632px;top:1119.09px;font-size:18.5px;color:#000;letter-spacing:0.45px;">kontakt@oberbau.ch</div>
<div class="t c" style="left:989px;top:1119.09px;font-size:18.5px;color:#000;">061 535 55 94</div>
<div class="t c" style="left:1164px;top:1119.09px;font-size:18.5px;color:#000;">Hauptstrasse 289</div>
<div class="t c" style="left:1442px;top:1119.09px;font-size:18.5px;color:#000;">4127</div>
<div class="t c" style="left:1504px;top:1119.09px;font-size:18.5px;color:#000;">Birsfelden</div>
<div class="t c" style="left:1660px;top:1119.09px;font-size:18.5px;color:#000;">Schweiz</div>
<svg style="position:absolute;left:1438px;top:1114px" width="12" height="10"><path d="M0 0 L11.5 0 L0 10 Z" fill="#1f7b1f"/></svg>
<div class="t c" style="left:46px;top:1146.52px;font-size:18.5px;color:#000;">P-00013</div>
<div class="t c" style="left:140px;top:1146.52px;font-size:18.5px;color:#000;">Emilio Kart, Lehrfahrerei AG</div>
<div class="t c" style="left:632px;top:1146.52px;font-size:18.5px;color:#000;letter-spacing:0.45px;">lehrfahrerei@gmail.com</div>
<div class="t c" style="left:989px;top:1146.52px;font-size:18.5px;color:#000;">022 366 55 44</div>
<div class="t c" style="left:1164px;top:1146.52px;font-size:18.5px;color:#000;">Burgunderplatz 1</div>
<div class="t c" style="left:1442px;top:1146.52px;font-size:18.5px;color:#000;">1000</div>
<div class="t c" style="left:1504px;top:1146.52px;font-size:18.5px;color:#000;">Genf</div>
<div class="t c" style="left:1660px;top:1146.52px;font-size:18.5px;color:#000;">Schweiz</div>
<svg style="position:absolute;left:1438px;top:1142px" width="12" height="10"><path d="M0 0 L11.5 0 L0 10 Z" fill="#1f7b1f"/></svg>
<div class="t c" style="left:46px;top:1173.95px;font-size:18.5px;color:#000;">P-00011</div>
<div class="t c" style="left:140px;top:1173.95px;font-size:18.5px;color:#000;">Dustin Leo, Coiffure Dustin</div>
<div class="t c" style="left:632px;top:1173.95px;font-size:18.5px;color:#000;letter-spacing:0.45px;">kontakt@dustincoiffeur.ch</div>
<div class="t c" style="left:989px;top:1173.95px;font-size:18.5px;color:#000;">041 200 30 40</div>
<div class="t c" style="left:1164px;top:1173.95px;font-size:18.5px;color:#000;">Leopold Platz</div>
<div class="t c" style="left:1442px;top:1173.95px;font-size:18.5px;color:#000;">6000</div>
<div class="t c" style="left:1504px;top:1173.95px;font-size:18.5px;color:#000;">Luzern</div>
<div class="t c" style="left:1660px;top:1173.95px;font-size:18.5px;color:#000;">Schweiz</div>
<svg style="position:absolute;left:1438px;top:1169px" width="12" height="10"><path d="M0 0 L11.5 0 L0 10 Z" fill="#1f7b1f"/></svg>
<div class="t c" style="left:46px;top:1201.38px;font-size:18.5px;color:#000;">P-00001</div>
<div class="t c" style="left:140px;top:1201.38px;font-size:18.5px;color:#000;">Aaron Martinez, Rohrbau AG</div>
<div class="t c" style="left:632px;top:1201.38px;font-size:18.5px;color:#000;letter-spacing:0.45px;">info@rohrbauag.ch</div>
<div class="t c" style="left:989px;top:1201.38px;font-size:18.5px;color:#000;">031 736 27 71</div>
<div class="t c" style="left:1164px;top:1201.38px;font-size:18.5px;color:#000;">Weilstrasse 20</div>
<div class="t c" style="left:1442px;top:1201.38px;font-size:18.5px;color:#000;">3000</div>
<div class="t c" style="left:1504px;top:1201.38px;font-size:18.5px;color:#000;">Bern</div>
<div class="t c" style="left:1660px;top:1201.38px;font-size:18.5px;color:#000;">Schweiz</div>
<svg style="position:absolute;left:1438px;top:1197px" width="12" height="10"><path d="M0 0 L11.5 0 L0 10 Z" fill="#1f7b1f"/></svg>
<div class="t c" style="left:46px;top:1228.81px;font-size:18.5px;color:#000;">P-00008</div>
<div class="t c" style="left:140px;top:1228.81px;font-size:18.5px;color:#000;">Cornelia Fritz, Fritz und Weg</div>
<div class="t c" style="left:632px;top:1228.81px;font-size:18.5px;color:#000;letter-spacing:0.45px;">fritzundweg@gmail.com</div>
<div class="t c" style="left:989px;top:1228.81px;font-size:18.5px;color:#000;">061 352 65 85</div>
<div class="t c" style="left:1164px;top:1228.81px;font-size:18.5px;color:#000;">Colmarerstrasse 90</div>
<div class="t c" style="left:1442px;top:1228.81px;font-size:18.5px;color:#000;">4000</div>
<div class="t c" style="left:1504px;top:1228.81px;font-size:18.5px;color:#000;">Basel</div>
<div class="t c" style="left:1660px;top:1228.81px;font-size:18.5px;color:#000;">Schweiz</div>
<svg style="position:absolute;left:1438px;top:1224px" width="12" height="10"><path d="M0 0 L11.5 0 L0 10 Z" fill="#1f7b1f"/></svg>
<div class="t c" style="left:46px;top:1256.24px;font-size:18.5px;color:#000;">P-00025</div>
<div class="t c" style="left:140px;top:1256.24px;font-size:18.5px;color:#000;">Konrad &amp; Elise Rosa, Konrad Lerntechnik</div>
<div class="t c" style="left:632px;top:1256.24px;font-size:18.5px;color:#000;letter-spacing:0.45px;">konrad@lerntechnik.ch</div>
<div class="t c" style="left:989px;top:1256.24px;font-size:18.5px;color:#000;">027 200 30 40</div>
<div class="t c" style="left:1164px;top:1256.24px;font-size:18.5px;color:#000;">Hauptstrasse 8</div>
<div class="t c" style="left:1442px;top:1256.24px;font-size:18.5px;color:#000;">1000</div>
<div class="t c" style="left:1504px;top:1256.24px;font-size:18.5px;color:#000;">Sion</div>
<svg style="position:absolute;left:1438px;top:1251px" width="12" height="10"><path d="M0 0 L11.5 0 L0 10 Z" fill="#1f7b1f"/></svg>
<div class="t c" style="left:46px;top:1283.67px;font-size:18.5px;color:#000;">P-00030</div>
<div class="t c" style="left:140px;top:1283.67px;font-size:18.5px;color:#000;">Matthias Erb, Erb Consulting AG</div>
<div class="t c" style="left:632px;top:1283.67px;font-size:18.5px;color:#000;letter-spacing:0.45px;">erbconsulting@gmx.ch</div>
<div class="t c" style="left:989px;top:1283.67px;font-size:18.5px;color:#000;">026 300 19 23</div>
<div class="t c" style="left:1164px;top:1283.67px;font-size:18.5px;color:#000;">Kirchweg 18</div>
<div class="t c" style="left:1442px;top:1283.67px;font-size:18.5px;color:#000;">1000</div>
<div class="t c" style="left:1504px;top:1283.67px;font-size:18.5px;color:#000;">Freiburg</div>
<div class="t c" style="left:1660px;top:1283.67px;font-size:18.5px;color:#000;">Schweiz</div>
<svg style="position:absolute;left:1438px;top:1279px" width="12" height="10"><path d="M0 0 L11.5 0 L0 10 Z" fill="#1f7b1f"/></svg>
<div class="t c" style="left:46px;top:1311.10px;font-size:18.5px;color:#000;">P-00037</div>
<div class="t c" style="left:140px;top:1311.10px;font-size:18.5px;color:#000;">Petra Gruber, Gruber GmbH</div>
<div class="t c" style="left:632px;top:1311.10px;font-size:18.5px;color:#000;letter-spacing:0.45px;">petigruber@domain.ch</div>
<div class="t c" style="left:1164px;top:1311.10px;font-size:18.5px;color:#000;">Hauptstrasse 20</div>
<div class="t c" style="left:1442px;top:1311.10px;font-size:18.5px;color:#000;">5000</div>
<div class="t c" style="left:1504px;top:1311.10px;font-size:18.5px;color:#000;">Aarau</div>
<div class="t c" style="left:1660px;top:1311.10px;font-size:18.5px;color:#000;">Schweiz</div>
<svg style="position:absolute;left:1438px;top:1306px" width="12" height="10"><path d="M0 0 L11.5 0 L0 10 Z" fill="#1f7b1f"/></svg>
<div class="t c" style="left:46px;top:1338.53px;font-size:18.5px;color:#000;">P-00038</div>
<div class="t c" style="left:140px;top:1338.53px;font-size:18.5px;color:#000;">Ramschladen</div>
<div class="t c" style="left:632px;top:1338.53px;font-size:18.5px;color:#000;letter-spacing:0.45px;">wirliebenramsch@ramschladen.ch</div>
<div class="t c" style="left:1164px;top:1338.53px;font-size:18.5px;color:#000;">Alte Zeughausstrasse 23</div>
<div class="t c" style="left:1442px;top:1338.53px;font-size:18.5px;color:#000;">3000</div>
<div class="t c" style="left:1504px;top:1338.53px;font-size:18.5px;color:#000;">Bern</div>
<div class="t c" style="left:1660px;top:1338.53px;font-size:18.5px;color:#000;">Schweiz</div>
<svg style="position:absolute;left:1438px;top:1334px" width="12" height="10"><path d="M0 0 L11.5 0 L0 10 Z" fill="#1f7b1f"/></svg>
<div class="t c" style="left:46px;top:1365.96px;font-size:18.5px;color:#000;">P-00032</div>
<div class="t c" style="left:140px;top:1365.96px;font-size:18.5px;color:#000;">Milena Matthys, Versandhandel AG</div>
<div class="t c" style="left:632px;top:1365.96px;font-size:18.5px;color:#000;letter-spacing:0.45px;">milena@versandhandelag.ch</div>
<div class="t c" style="left:989px;top:1365.96px;font-size:18.5px;color:#000;">018 728 73 81</div>
<div class="t c" style="left:1164px;top:1365.96px;font-size:18.5px;color:#000;">Alte Sägistrasse 5</div>
<div class="t c" style="left:1442px;top:1365.96px;font-size:18.5px;color:#000;">5948</div>
<div class="t c" style="left:1504px;top:1365.96px;font-size:18.5px;color:#000;">Ried</div>
<div class="t c" style="left:1660px;top:1365.96px;font-size:18.5px;color:#000;">Schweiz</div>
<svg style="position:absolute;left:1438px;top:1361px" width="12" height="10"><path d="M0 0 L11.5 0 L0 10 Z" fill="#1f7b1f"/></svg>
<div class="t c" style="left:46px;top:1393.39px;font-size:18.5px;color:#000;">P-00026</div>
<div class="t c" style="left:140px;top:1393.39px;font-size:18.5px;color:#000;">Luisa Tom, Malerarbeiten Tom</div>
<div class="t c" style="left:632px;top:1393.39px;font-size:18.5px;color:#000;letter-spacing:0.45px;">tom@malerei.ch</div>
<div class="t c" style="left:989px;top:1393.39px;font-size:18.5px;color:#000;">031 800 10 00</div>
<div class="t c" style="left:1164px;top:1393.39px;font-size:18.5px;color:#000;">Hauptstrasse 39</div>
<div class="t c" style="left:1442px;top:1393.39px;font-size:18.5px;color:#000;">1000</div>
<div class="t c" style="left:1504px;top:1393.39px;font-size:18.5px;color:#000;">Sion</div>
<div class="t c" style="left:1660px;top:1393.39px;font-size:18.5px;color:#000;">Schweiz</div>
<svg style="position:absolute;left:1438px;top:1389px" width="12" height="10"><path d="M0 0 L11.5 0 L0 10 Z" fill="#1f7b1f"/></svg>
<div style="position:absolute;left:599px;top:315px;width:23px;height:22px;border:2px solid #a3a3a3;border-radius:3px;background:linear-gradient(#fdfdfd,#f0f0f0);"></div>
<svg style="position:absolute;left:605px;top:323px;" width="14" height="9" viewBox="0 0 14 9"><path d="M0 0 L14 0 L7 9 Z" fill="#767676"/></svg>
<div style="position:absolute;left:956px;top:315px;width:23px;height:22px;border:2px solid #a3a3a3;border-radius:3px;background:linear-gradient(#fdfdfd,#f0f0f0);"></div>
<svg style="position:absolute;left:962px;top:323px;" width="14" height="9" viewBox="0 0 14 9"><path d="M0 0 L14 0 L7 9 Z" fill="#767676"/></svg>
<div style="position:absolute;left:1131px;top:315px;width:23px;height:22px;border:2px solid #a3a3a3;border-radius:3px;background:linear-gradient(#fdfdfd,#f0f0f0);"></div>
<svg style="position:absolute;left:1137px;top:323px;" width="14" height="9" viewBox="0 0 14 9"><path d="M0 0 L14 0 L7 9 Z" fill="#767676"/></svg>
<div style="position:absolute;left:1409px;top:315px;width:23px;height:22px;border:2px solid #a3a3a3;border-radius:3px;background:linear-gradient(#fdfdfd,#f0f0f0);"></div>
<svg style="position:absolute;left:1415px;top:323px;" width="14" height="9" viewBox="0 0 14 9"><path d="M0 0 L14 0 L7 9 Z" fill="#767676"/></svg>
<div style="position:absolute;left:1471px;top:315px;width:23px;height:22px;border:2px solid #a3a3a3;border-radius:3px;background:linear-gradient(#fdfdfd,#f0f0f0);"></div>
<svg style="position:absolute;left:1477px;top:323px;" width="14" height="9" viewBox="0 0 14 9"><path d="M0 0 L14 0 L7 9 Z" fill="#767676"/></svg>
<div style="position:absolute;left:1627px;top:315px;width:23px;height:22px;border:2px solid #a3a3a3;border-radius:3px;background:linear-gradient(#fdfdfd,#f0f0f0);"></div>
<svg style="position:absolute;left:1633px;top:323px;" width="14" height="9" viewBox="0 0 14 9"><path d="M0 0 L14 0 L7 9 Z" fill="#767676"/></svg>
<div style="position:absolute;left:1742px;top:315px;width:23px;height:22px;border:2px solid #a3a3a3;border-radius:3px;background:linear-gradient(#fdfdfd,#f0f0f0);"></div>
<svg style="position:absolute;left:1748px;top:323px;" width="14" height="9" viewBox="0 0 14 9"><path d="M0 0 L14 0 L7 9 Z" fill="#767676"/></svg>
<div style="position:absolute;left:1979px;top:315px;width:23px;height:22px;border:2px solid #a3a3a3;border-radius:3px;background:linear-gradient(#fdfdfd,#f0f0f0);"></div>
<svg style="position:absolute;left:1985px;top:323px;" width="14" height="9" viewBox="0 0 14 9"><path d="M0 0 L14 0 L7 9 Z" fill="#767676"/></svg>
<div style="position:absolute;left:106px;top:317px;width:2px;height:22px;background:#a9a9a9;"></div>
<svg style="position:absolute;left:113px;top:323.5px;" width="14" height="9" viewBox="0 0 14 9"><path d="M0 0 L14 0 L7 9 Z" fill="#767676"/></svg>
<div style="position:absolute;left:38px;top:311px;width:91px;height:25px;border:4px solid #1f6b41;"></div>
<div style="position:absolute;left:129px;top:336px;width:11px;height:11px;background:#fff;"></div>
<div style="position:absolute;left:130px;top:337px;width:9px;height:9px;background:#1f6b41;"></div>
<div style="position:absolute;left:0px;top:1408px;width:2500px;height:47px;background:#ececec;"></div>
<div style="position:absolute;left:0px;top:1408px;width:2500px;height:1px;background:#cfcfcf;"></div>
<div style="position:absolute;left:111px;top:1407px;width:160px;height:41px;background:#fff;border-radius:0 0 5px 5px;box-shadow:0 1.5px 1px #b3b3b3, 1px 0 0 #d6d6d6, -1px 0 0 #d6d6d6;"></div>
<div class="t" style="left:142.0px;top:1415.41px;font-size:22.67px;color:#237a48;font-weight:700;letter-spacing:-0.750px;-webkit-text-stroke:0;">Personen</div>
<div style="position:absolute;left:341px;top:1408px;width:2px;height:38px;background:#d3d3d3;"></div>
<div style="position:absolute;left:0px;top:1455px;width:2500px;height:42px;background:#1e6a40;"></div>
<div class="t" style="left:45.0px;top:1466.51px;font-size:21.37px;color:#f2f2f2;letter-spacing:0.697px;-webkit-text-stroke:0.2px;">Bereit</div>
<svg style="position:absolute;left:0px;top:0px;" width="5" height="5" viewBox="0 0 5 5"><path d="M0 0 H4 L3 1 H2 V2 H1 V3 L0 4 Z" fill="#000"/></svg>
<svg style="position:absolute;left:2495px;top:0px;" width="5" height="5" viewBox="0 0 5 5"><path d="M5 0 H1 L2 1 H3 V2 H4 V3 L5 4 Z" fill="#000"/></svg>
<svg style="position:absolute;left:0px;top:1492px;" width="5" height="5" viewBox="0 0 5 5"><path d="M0 5 H4 L3 4 H2 V3 H1 V2 L0 1 Z" fill="#000"/></svg>
<svg style="position:absolute;left:2495px;top:1492px;" width="5" height="5" viewBox="0 0 5 5"><path d="M5 5 H1 L2 4 H3 V3 H4 V2 L5 1 Z" fill="#000"/></svg>
<div class="t" style="left:2400.0px;top:1466.51px;font-size:21.37px;color:#f2f2f2;letter-spacing:0.186px;-webkit-text-stroke:0.2px;">100%</div>
<svg style="position:absolute;left:174px;top:11px;" width="30" height="26" viewBox="0 0 30 26"><rect x="0" y="0" width="29" height="25.5" rx="2.5" fill="#858585"/><rect x="7.5" y="2.5" width="19" height="20.5" fill="#e7e7e7"/><path d="M20 2.5 L26.5 9 L20 9 Z" fill="#858585"/><circle cx="3.8" cy="5" r="1" fill="#e7e7e7"/><circle cx="3.8" cy="8.5" r="1" fill="#e7e7e7"/><circle cx="3.8" cy="12" r="1" fill="#e7e7e7"/></svg>
<svg style="position:absolute;left:232px;top:11px;" width="27" height="26" viewBox="0 0 27 26"><path d="M2 0 H24 A2.5 2.5 0 0 1 26.5 2.5 V23 A2.5 2.5 0 0 1 24 25.5 H4 L0 21.5 V2 A2 2 0 0 1 2 0 Z" fill="#858585"/><rect x="3.5" y="2.5" width="19.5" height="11" fill="#e6e6e6"/><path d="M7 25.5 V18.5 H19.5 V25.5 H16 V21.5 H10.5 V25.5 Z" fill="#e6e6e6"/></svg>
<svg style="position:absolute;left:287px;top:10px;" width="35" height="28" viewBox="0 0 35 28"><path d="M7.5 2.5 L2 8 L7.5 13.5 M2.5 8 H18 A8.5 8.5 0 0 1 18 25 H16" fill="none" stroke="#c6c6c6" stroke-width="3.4" stroke-linecap="round" stroke-linejoin="round"/></svg>
<svg style="position:absolute;left:329.5px;top:20px;" width="9" height="7" viewBox="0 0 9 7"><path d="M0 0 L9 0 L4.5 7 Z" fill="#b3b3b3"/></svg>
<svg style="position:absolute;left:360px;top:10px;" width="32" height="30" viewBox="0 0 32 30"><path d="M6.5 8.5 A10.5 10.5 0 1 0 19 6" fill="none" stroke="#c8c8c8" stroke-width="3.2" stroke-linecap="round"/><path d="M17 14 V3 H29" fill="none" stroke="#c8c8c8" stroke-width="3.2" stroke-linecap="round" stroke-linejoin="round"/></svg>
<div style="position:absolute;left:427px;top:19px;width:13px;height:2px;background:#8a8a8a;"></div>
<svg style="position:absolute;left:427px;top:25px;" width="13" height="6.5" viewBox="0 0 13 6.5"><path d="M0 0 L13 0 L6.5 6.5 Z" fill="#8a8a8a"/></svg>
<svg style="position:absolute;left:1110px;top:10px;" width="28" height="28" viewBox="0 0 28 28"><path d="M7 1 H20 L26 7 V27 H7 Z" fill="#fff" stroke="#b9b9b9" stroke-width="1"/><path d="M20 1 V7 H26" fill="#eee" stroke="#b9b9b9" stroke-width="1"/><g stroke="#4ea55a" stroke-width="1.3"><path d="M13 11 H24 M13 15 H24 M13 19 H24 M13 23 H24 M18.5 10 V25"/></g><rect x="1" y="8" width="13" height="14" fill="#1f7a43"/><path d="M4 11 L11 19 M11 11 L4 19" stroke="#fff" stroke-width="1.8"/></svg>
<svg style="position:absolute;left:2084px;top:13px;" width="34" height="22" viewBox="0 0 34 22"><circle cx="8.5" cy="8.5" r="6.5" fill="none" stroke="#3a3a3a" stroke-width="2"/><path d="M13.5 13.5 L19 19" stroke="#3a3a3a" stroke-width="2.2" stroke-linecap="round"/><path d="M22 8.5 L25.5 12 L29 8.5" fill="none" stroke="#3a3a3a" stroke-width="1.6"/></svg>
<svg style="position:absolute;left:2432px;top:10px;" width="30" height="28" viewBox="0 0 30 28"><circle cx="14" cy="14" r="12.5" fill="none" stroke="#222" stroke-width="2.4"/><ellipse cx="10" cy="10.5" rx="1.6" ry="2.2" fill="#222"/><ellipse cx="18" cy="10.5" rx="1.6" ry="2.2" fill="#222"/><path d="M7.5 16 Q14 23 20.5 16" fill="none" stroke="#222" stroke-width="2.2" stroke-linecap="round"/></svg>
<svg style="position:absolute;left:2469px;top:20px;" width="9.5" height="7" viewBox="0 0 9.5 7"><path d="M0 0 L9.5 0 L4.75 7 Z" fill="#6a6a6a"/></svg>
<svg style="position:absolute;left:2277px;top:57px;" width="34" height="24" viewBox="0 0 34 24"><circle cx="10" cy="6.5" r="5.5" fill="#8c8c8c"/><path d="M0 22 V18.5 Q0 13.5 6 13 H14 Q20 13.5 20 18.5 V22 Z" fill="#8c8c8c"/><path d="M25 2 V15 M18.5 8.5 H31.5" stroke="#8c8c8c" stroke-width="2.8"/></svg>
<svg style="position:absolute;left:2450px;top:62px;" width="20" height="14" viewBox="0 0 20 14"><path d="M2 11 L9.5 3.5 L17 11" fill="none" stroke="#b0b0b0" stroke-width="3.2" stroke-linecap="round" stroke-linejoin="round"/></svg>
<svg style="position:absolute;left:27px;top:104px;" width="46" height="57" viewBox="0 0 46 57"><defs><linearGradient id="cb" x1="0" x2="1"><stop offset="0" stop-color="#d49a4f"/><stop offset="1" stop-color="#eab66f"/></linearGradient></defs><rect x="1" y="6" width="40" height="46" rx="3" fill="url(#cb)" stroke="#c08a45" stroke-width="0.8"/><rect x="8" y="6.5" width="25" height="9" rx="4" fill="#646464"/><circle cx="20.5" cy="6.5" r="6" fill="#646464"/><circle cx="20.5" cy="5.5" r="1.7" fill="#e6aa5e"/><path d="M15 20.5 H32.5 L42.5 31 V54.5 H15 Z" fill="#fff" stroke="#c9c9c9" stroke-width="1"/><path d="M32.5 20.5 V31 H42.5" fill="#ededed" stroke="#c9c9c9" stroke-width="1"/></svg>
<svg style="position:absolute;left:87.75px;top:130.25px;" width="9.5" height="7.5" viewBox="0 0 9.5 7.5"><path d="M0 0 L9.5 0 L4.75 7.5 Z" fill="#5e5e5e"/></svg>
<svg style="position:absolute;left:121px;top:99px;" width="30" height="31" viewBox="0 0 30 31"><path d="M5 0.5 L9 1.5 L20.5 20.5 L17.5 21.5 Z" fill="#1b1b1b"/><path d="M22.5 0.5 L18.5 1.5 L7 20.5 L10 21.5 Z" fill="#1b1b1b"/><circle cx="7.5" cy="24" r="4.5" fill="none" stroke="#2b78d4" stroke-width="2.2"/><circle cx="21.5" cy="24" r="4.5" fill="none" stroke="#2b78d4" stroke-width="2.2"/></svg>
<svg style="position:absolute;left:122px;top:142px;" width="28" height="30" viewBox="0 0 28 30"><path d="M1 8 H14 V28 H1 Z" fill="#fff" stroke="#a9a9a9" stroke-width="1"/><path d="M8.5 1 H19 L24.5 6.5 V19.5 H8.5 Z" fill="#fff" stroke="#a9a9a9" stroke-width="1"/><path d="M19 1 V6.5 H24.5" fill="#eee" stroke="#a9a9a9" stroke-width="1"/></svg>
<svg style="position:absolute;left:162.75px;top:152.25px;" width="9.5" height="7.5" viewBox="0 0 9.5 7.5"><path d="M0 0 L9.5 0 L4.75 7.5 Z" fill="#5e5e5e"/></svg>
<svg style="position:absolute;left:120px;top:184px;" width="32" height="30" viewBox="0 0 32 30"><path d="M1 13.5 L12 24.5 L9.5 28 Q7 29 4 26 L0 21 Q-0.5 18 1 13.5 Z" fill="#3b7fd0"/><path d="M2 12.5 L8 8.5 L17.5 18 L13.5 24 Z" fill="#a29481"/><path d="M7.5 8 L13 4 L22 13 L17.5 18.5 Z" fill="#dadada" stroke="#9c9c9c" stroke-width="0.8"/><path d="M15 7.5 L24.5 1.5 Q28 0 29 2.5 Q30 5 27 7.5 L20 13 Z" fill="#e9e9e9" stroke="#9c9c9c" stroke-width="0.8"/></svg>
<div style="position:absolute;left:194.5px;top:100px;width:2px;height:113px;background:#e2e2e2;"></div>
<div style="position:absolute;left:210.5px;top:107.3px;width:189.0px;height:40.500000000000014px;border:1.5px solid #bababa;border-radius:6px;background:#fff;"></div>
<div style="position:absolute;left:375.5px;top:113.3px;width:1px;height:31.500000000000014px;background:#d9d9d9;"></div>
<svg style="position:absolute;left:383.85px;top:125.05000000000001px;" width="9.5" height="8" viewBox="0 0 9.5 8"><path d="M0 0 L9.5 0 L4.75 8 Z" fill="#5e5e5e"/></svg>
<div class="t" style="left:219.5px;top:115.78px;font-size:24.71px;color:#1a1a1a;letter-spacing:-0.986px;">Calibri</div>
<div style="position:absolute;left:410.3px;top:107.4px;width:93.39999999999998px;height:40.19999999999999px;border:1.5px solid #bababa;border-radius:6px;background:#fff;"></div>
<div style="position:absolute;left:480.5px;top:113.4px;width:1px;height:31.19999999999999px;background:#d9d9d9;"></div>
<svg style="position:absolute;left:488.55px;top:125.0px;" width="9.5" height="8" viewBox="0 0 9.5 8"><path d="M0 0 L9.5 0 L4.75 8 Z" fill="#5e5e5e"/></svg>
<div class="t" style="left:418.5px;top:116.42px;font-size:23.84px;color:#1a1a1a;">11</div>
<div style="position:absolute;left:515px;top:108.4px;width:102.79999999999995px;height:38.5px;border:1.5px solid #bcbcbc;border-radius:6px;background:linear-gradient(#f9f9f9,#ececec);overflow:hidden;"></div>
<div style="position:absolute;left:567.9px;top:109.4px;width:1px;height:39.5px;background:#cacaca;"></div>
<div class="t" style="left:524.3px;top:113.15px;font-size:29.36px;color:#333;letter-spacing:-0.894px;">A</div>
<svg style="position:absolute;left:547.2px;top:123.2px;" width="12.8" height="7.9" viewBox="0 0 12.8 7.9"><path d="M0 7.9 L12.8 7.9 L6.4 0 Z" fill="#2d7ad6"/></svg>
<div class="t" style="left:578.6px;top:116.97px;font-size:24.13px;color:#333;letter-spacing:-0.294px;">A</div>
<svg style="position:absolute;left:597.6px;top:126.2px;" width="12.8" height="7.9" viewBox="0 0 12.8 7.9"><path d="M0 0 L12.8 0 L6.4 7.9 Z" fill="#2d7ad6"/></svg>
<div style="position:absolute;left:210.5px;top:162.5px;width:177.10000000000002px;height:39.80000000000001px;border:1.5px solid #bcbcbc;border-radius:6px;background:linear-gradient(#f9f9f9,#ececec);overflow:hidden;"><div style="position:absolute;left:-1.5px;top:0;width:54.5px;height:100%;background:linear-gradient(#d9d9d9,#cdcdcd);box-shadow:inset 0 1px 1px #a9a9a9, 1px 0 0 #b0b0b0;"></div></div>
<div style="position:absolute;left:317.4px;top:163.5px;width:1px;height:40.80000000000001px;background:#cacaca;"></div>
<div style="position:absolute;left:368.6px;top:169.5px;width:1px;height:28.80000000000001px;background:#d6d6d6;"></div>
<div class="t" style="left:230.3px;top:170.86px;font-size:26.16px;color:#383838;font-weight:700;letter-spacing:-2.784px;">F</div>
<div class="t" style="left:281.5px;top:170.86px;font-size:26.16px;color:#383838;font-style:italic;letter-spacing:0.247px;">K</div>
<div class="t" style="left:335.6px;top:170.86px;font-size:26.16px;color:#383838;letter-spacing:-4.291px;">U</div>
<div style="position:absolute;left:335px;top:194.8px;width:18px;height:2px;background:#383838;"></div>
<svg style="position:absolute;left:374.05px;top:179.9px;" width="8.5" height="7.2" viewBox="0 0 8.5 7.2"><path d="M0 0 L8.5 0 L4.25 7.2 Z" fill="#5e5e5e"/></svg>
<div style="position:absolute;left:400px;top:163.2px;width:68.10000000000002px;height:38.5px;border:1.5px solid #bcbcbc;border-radius:6px;background:linear-gradient(#f9f9f9,#ececec);overflow:hidden;"></div>
<div style="position:absolute;left:449.2px;top:170.2px;width:1px;height:27.5px;background:#d6d6d6;"></div>
<svg style="position:absolute;left:410px;top:168px;" width="34" height="32" viewBox="0 0 34 32"><rect x="1.00" y="0.5" width="1.6" height="1.6" fill="#4a4a4a"/><rect x="1.00" y="13.5" width="1.6" height="1.6" fill="#4a4a4a"/><rect x="4.85" y="0.5" width="1.6" height="1.6" fill="#4a4a4a"/><rect x="4.85" y="13.5" width="1.6" height="1.6" fill="#4a4a4a"/><rect x="8.70" y="0.5" width="1.6" height="1.6" fill="#4a4a4a"/><rect x="8.70" y="13.5" width="1.6" height="1.6" fill="#4a4a4a"/><rect x="12.55" y="0.5" width="1.6" height="1.6" fill="#4a4a4a"/><rect x="12.55" y="13.5" width="1.6" height="1.6" fill="#4a4a4a"/><rect x="16.40" y="0.5" width="1.6" height="1.6" fill="#4a4a4a"/><rect x="16.40" y="13.5" width="1.6" height="1.6" fill="#4a4a4a"/><rect x="20.25" y="0.5" width="1.6" height="1.6" fill="#4a4a4a"/><rect x="20.25" y="13.5" width="1.6" height="1.6" fill="#4a4a4a"/><rect x="24.10" y="0.5" width="1.6" height="1.6" fill="#4a4a4a"/><rect x="24.10" y="13.5" width="1.6" height="1.6" fill="#4a4a4a"/><rect x="27.95" y="0.5" width="1.6" height="1.6" fill="#4a4a4a"/><rect x="27.95" y="13.5" width="1.6" height="1.6" fill="#4a4a4a"/><rect x="31.80" y="0.5" width="1.6" height="1.6" fill="#4a4a4a"/><rect x="31.80" y="13.5" width="1.6" height="1.6" fill="#4a4a4a"/><rect x="1.00" y="0.50" width="1.6" height="1.6" fill="#4a4a4a"/><rect x="16.20" y="0.50" width="1.6" height="1.6" fill="#4a4a4a"/><rect x="31.00" y="0.50" width="1.6" height="1.6" fill="#4a4a4a"/><rect x="1.00" y="4.10" width="1.6" height="1.6" fill="#4a4a4a"/><rect x="16.20" y="4.10" width="1.6" height="1.6" fill="#4a4a4a"/><rect x="31.00" y="4.10" width="1.6" height="1.6" fill="#4a4a4a"/><rect x="1.00" y="7.70" width="1.6" height="1.6" fill="#4a4a4a"/><rect x="16.20" y="7.70" width="1.6" height="1.6" fill="#4a4a4a"/><rect x="31.00" y="7.70" width="1.6" height="1.6" fill="#4a4a4a"/><rect x="1.00" y="11.30" width="1.6" height="1.6" fill="#4a4a4a"/><rect x="16.20" y="11.30" width="1.6" height="1.6" fill="#4a4a4a"/><rect x="31.00" y="11.30" width="1.6" height="1.6" fill="#4a4a4a"/><rect x="1.00" y="14.90" width="1.6" height="1.6" fill="#4a4a4a"/><rect x="16.20" y="14.90" width="1.6" height="1.6" fill="#4a4a4a"/><rect x="31.00" y="14.90" width="1.6" height="1.6" fill="#4a4a4a"/><rect x="1.00" y="18.50" width="1.6" height="1.6" fill="#4a4a4a"/><rect x="16.20" y="18.50" width="1.6" height="1.6" fill="#4a4a4a"/><rect x="31.00" y="18.50" width="1.6" height="1.6" fill="#4a4a4a"/><rect x="1.00" y="22.10" width="1.6" height="1.6" fill="#4a4a4a"/><rect x="16.20" y="22.10" width="1.6" height="1.6" fill="#4a4a4a"/><rect x="31.00" y="22.10" width="1.6" height="1.6" fill="#4a4a4a"/><rect x="1.00" y="25.70" width="1.6" height="1.6" fill="#4a4a4a"/><rect x="16.20" y="25.70" width="1.6" height="1.6" fill="#4a4a4a"/><rect x="31.00" y="25.70" width="1.6" height="1.6" fill="#4a4a4a"/><rect x="1" y="29.5" width="31" height="2" fill="#222"/></svg>
<svg style="position:absolute;left:455.8px;top:179.95px;" width="9" height="7.5" viewBox="0 0 9 7.5"><path d="M0 0 L9 0 L4.5 7.5 Z" fill="#5e5e5e"/></svg>
<div style="position:absolute;left:480.5px;top:163.2px;width:137.29999999999995px;height:38.5px;border:1.5px solid #bcbcbc;border-radius:6px;background:linear-gradient(#f9f9f9,#ececec);overflow:hidden;"></div>
<div style="position:absolute;left:548.7px;top:164.2px;width:1px;height:39.5px;background:#cacaca;"></div>
<div style="position:absolute;left:526px;top:170.2px;width:1px;height:27.5px;background:#d6d6d6;"></div>
<div style="position:absolute;left:599px;top:170.2px;width:1px;height:27.5px;background:#d6d6d6;"></div>
<svg style="position:absolute;left:485px;top:162px;" width="30" height="30" viewBox="0 0 30 30"><path d="M5.3 17.7 L15 7.6 L23.5 18 L14.7 27.1 Z" fill="#f4f4f6" stroke="#3a3a3a" stroke-width="1.3" stroke-linejoin="round"/><path d="M11.6 12.3 L21.4 19.8" stroke="#2f80e0" stroke-width="2.8"/><path d="M15.6 8.2 Q14.8 3.2 17.4 3.2 Q20.2 3.2 19.9 8 L19.3 14" fill="none" stroke="#2a2a2a" stroke-width="1.5"/><path d="M20.6 12.6 Q26.8 13.5 26.8 19 Q26.8 21.8 25.4 24.2" fill="none" stroke="#2a6fd0" stroke-width="3" stroke-linecap="round"/></svg>
<div style="position:absolute;left:485px;top:191.4px;width:31.5px;height:7.5px;background:#ffff00;border:0.8px solid #d6d600;border-radius:2px;"></div>
<svg style="position:absolute;left:532.5px;top:179.95px;" width="9" height="7.5" viewBox="0 0 9 7.5"><path d="M0 0 L9 0 L4.5 7.5 Z" fill="#5e5e5e"/></svg>
<div class="t" style="left:564.8px;top:165.60px;font-size:25.87px;color:#333;letter-spacing:0.950px;">A</div>
<div style="position:absolute;left:558px;top:191.4px;width:32.5px;height:8.5px;background:#ff0000;border-radius:2px;"></div>
<svg style="position:absolute;left:606.0px;top:179.95px;" width="9" height="7.5" viewBox="0 0 9 7.5"><path d="M0 0 L9 0 L4.5 7.5 Z" fill="#5e5e5e"/></svg>
<div style="position:absolute;left:636.6px;top:100px;width:2px;height:113px;background:#e2e2e2;"></div>
<div style="position:absolute;left:654.3px;top:108.2px;width:156.4000000000001px;height:38.999999999999986px;border:1.5px solid #bcbcbc;border-radius:6px;background:linear-gradient(#f9f9f9,#ececec);overflow:hidden;"><div style="position:absolute;left:104.60000000000002px;top:0;width:53.30000000000007px;height:100%;background:linear-gradient(#d9d9d9,#cdcdcd);box-shadow:inset 0 1px 1px #a9a9a9, 1px 0 0 #b0b0b0;"></div></div>
<div style="position:absolute;left:707.2px;top:109.2px;width:1px;height:39.999999999999986px;background:#cacaca;"></div>
<div style="position:absolute;left:760.4px;top:109.2px;width:1px;height:39.999999999999986px;background:#cacaca;"></div>
<svg style="position:absolute;left:660px;top:110px;" width="60" height="40" viewBox="0 0 60 40"><rect x="10.00" y="8.00" width="21.80" height="2" fill="#333"/><rect x="10.00" y="13.60" width="21.80" height="2" fill="#333"/></svg>
<svg style="position:absolute;left:715px;top:110px;" width="60" height="40" viewBox="0 0 60 40"><rect x="8.00" y="15.20" width="22.00" height="2" fill="#333"/><rect x="8.00" y="21.20" width="22.00" height="2" fill="#333"/></svg>
<svg style="position:absolute;left:770px;top:110px;" width="60" height="40" viewBox="0 0 60 40"><rect x="6.20" y="22.70" width="21.70" height="2" fill="#333"/><rect x="6.20" y="28.50" width="21.70" height="2" fill="#333"/></svg>
<div style="position:absolute;left:822.7px;top:108.2px;width:62.39999999999998px;height:38.999999999999986px;border:1.5px solid #bcbcbc;border-radius:6px;background:linear-gradient(#f9f9f9,#ececec);overflow:hidden;"></div>
<svg style="position:absolute;left:822px;top:106px;" width="60" height="46" viewBox="0 0 60 46"><g transform="translate(23.5,21.5) rotate(-45)"><text x="0" y="7" text-anchor="middle" font-family="Liberation Sans" font-size="23" stroke="#333" stroke-width="0.5" fill="#333">ab</text></g><path d="M24.5 36.8 L40 20.5" stroke="#2f7ad8" stroke-width="2" stroke-linecap="round"/><path d="M35.6 19.5 L41.8 19.2 L41.5 25.7 Z" fill="#2f7ad8"/></svg>
<svg style="position:absolute;left:873.15px;top:125.19999999999999px;" width="8.7" height="6.8" viewBox="0 0 8.7 6.8"><path d="M0 0 L8.7 0 L4.35 6.8 Z" fill="#5e5e5e"/></svg>
<div style="position:absolute;left:654.3px;top:163.5px;width:156.4000000000001px;height:38.19999999999999px;border:1.5px solid #bcbcbc;border-radius:6px;background:linear-gradient(#f9f9f9,#ececec);overflow:hidden;"></div>
<div style="position:absolute;left:707.2px;top:164.5px;width:1px;height:39.19999999999999px;background:#cacaca;"></div>
<div style="position:absolute;left:760.4px;top:164.5px;width:1px;height:39.19999999999999px;background:#cacaca;"></div>
<svg style="position:absolute;left:660px;top:165px;" width="60" height="40" viewBox="0 0 60 40"><rect x="8.00" y="9.80" width="23.80" height="2" fill="#333"/><rect x="8.00" y="15.30" width="16.20" height="2" fill="#333"/><rect x="8.00" y="20.70" width="27.40" height="2" fill="#333"/><rect x="8.00" y="26.20" width="19.80" height="2" fill="#333"/></svg>
<svg style="position:absolute;left:715px;top:165px;" width="60" height="40" viewBox="0 0 60 40"><rect x="8.00" y="9.80" width="22.00" height="2" fill="#333"/><rect x="12.10" y="15.30" width="13.90" height="2" fill="#333"/><rect x="6.10" y="20.70" width="25.60" height="2" fill="#333"/><rect x="10.00" y="26.20" width="18.10" height="2" fill="#333"/></svg>
<svg style="position:absolute;left:768px;top:165px;" width="60" height="40" viewBox="0 0 60 40"><rect x="8.20" y="9.80" width="23.60" height="2" fill="#333"/><rect x="16.00" y="15.30" width="15.80" height="2" fill="#333"/><rect x="4.50" y="20.70" width="27.30" height="2" fill="#333"/><rect x="12.10" y="26.20" width="19.70" height="2" fill="#333"/></svg>
<div style="position:absolute;left:822.7px;top:163.5px;width:102.89999999999998px;height:38.19999999999999px;border:1.5px solid #bcbcbc;border-radius:6px;background:linear-gradient(#f9f9f9,#ececec);overflow:hidden;"></div>
<div style="position:absolute;left:875.4px;top:164.5px;width:1px;height:39.19999999999999px;background:#cacaca;"></div>
<svg style="position:absolute;left:840px;top:165px;" width="60" height="40" viewBox="0 0 60 40"><rect x="5.70" y="9.80" width="18.20" height="2" fill="#333"/><rect x="11.20" y="15.30" width="12.70" height="2" fill="#333"/><rect x="11.20" y="20.70" width="12.70" height="2" fill="#333"/><rect x="5.70" y="26.20" width="18.20" height="2" fill="#333"/></svg>
<svg style="position:absolute;left:832px;top:176px;" width="16" height="15" viewBox="0 0 16 15"><path d="M0 7.3 L7.5 0 V4 H15 V10.5 H7.5 V14.5 Z" fill="#2f7ed8"/></svg>
<svg style="position:absolute;left:893px;top:165px;" width="60" height="40" viewBox="0 0 60 40"><rect x="6.00" y="9.80" width="18.10" height="2" fill="#333"/><rect x="11.40" y="15.30" width="12.70" height="2" fill="#333"/><rect x="11.40" y="20.70" width="12.70" height="2" fill="#333"/><rect x="6.00" y="26.20" width="18.10" height="2" fill="#333"/></svg>
<svg style="position:absolute;left:885.5px;top:176px;" width="16" height="15" viewBox="0 0 16 15"><path d="M15 7.3 L7.5 0 V4 H0 V10.5 H7.5 V14.5 Z" fill="#2f7ed8"/></svg>
<div style="position:absolute;left:944.1px;top:100px;width:2px;height:113px;background:#e2e2e2;"></div>
<svg style="position:absolute;left:969px;top:117px;" width="40" height="27" viewBox="0 0 40 27"><rect x="2.3" y="2.2" width="17.6" height="21.5" fill="#fff" stroke="#7e7e7e" stroke-width="1.1"/><path d="M3.5 7.4 H25" stroke="#3a3a3a" stroke-width="1.5"/><path d="M3.5 18.4 H12.5" stroke="#3a3a3a" stroke-width="1.5"/><path d="M25.5 5.4 Q34.5 6.8 34.5 13.5 Q34.5 19.5 27.5 21" fill="none" stroke="#2f7ed8" stroke-width="2.6"/><path d="M29.3 15.6 L23.4 20.3 L29.8 25.3 Z" fill="#2f7ed8"/></svg>
<svg style="position:absolute;left:972px;top:168px;" width="31" height="31" viewBox="0 0 31 31"><rect x="1" y="1" width="28.5" height="28.5" fill="#fff" stroke="#8a8a8a" stroke-width="1"/><path d="M1 8 H29.5 M1 22 H29.5 M15 22 V29.5 M15 1 V8" stroke="#b0b0b0" stroke-width="1"/><path d="M7 15 H23" stroke="#2f7ed8" stroke-width="1.8"/><path d="M4 15 L9 11 V19 Z M26 15 L21 11 V19 Z" fill="#2f7ed8"/></svg>
<svg style="position:absolute;left:1258.9px;top:179.85px;" width="9" height="7.5" viewBox="0 0 9 7.5"><path d="M0 0 L9 0 L4.5 7.5 Z" fill="#5e5e5e"/></svg>
<div style="position:absolute;left:1290px;top:100px;width:2px;height:113px;background:#e2e2e2;"></div>
<div style="position:absolute;left:1307.9px;top:107.9px;width:286.0999999999999px;height:39.29999999999998px;border:1.5px solid #bababa;border-radius:6px;background:#fff;"></div>
<div style="position:absolute;left:1571px;top:113.9px;width:1px;height:30.299999999999983px;background:#d9d9d9;"></div>
<svg style="position:absolute;left:1579.05px;top:125.05000000000001px;" width="9.5" height="8" viewBox="0 0 9.5 8"><path d="M0 0 L9.5 0 L4.75 8 Z" fill="#5e5e5e"/></svg>
<div class="t" style="left:1315.7px;top:116.08px;font-size:24.71px;color:#1a1a1a;letter-spacing:-1.138px;">Standard</div>
<div style="position:absolute;left:1308px;top:163.2px;width:170.29999999999995px;height:38.5px;border:1.5px solid #bcbcbc;border-radius:6px;background:linear-gradient(#f9f9f9,#ececec);overflow:hidden;"></div>
<div style="position:absolute;left:1375.7px;top:164.2px;width:1px;height:39.5px;background:#cacaca;"></div>
<div style="position:absolute;left:1428.5px;top:164.2px;width:1px;height:39.5px;background:#cacaca;"></div>
<div style="position:absolute;left:1353px;top:170.2px;width:1px;height:27.5px;background:#d6d6d6;"></div>
<svg style="position:absolute;left:1310px;top:168px;" width="36" height="33" viewBox="0 0 36 33"><ellipse cx="23" cy="21.0" rx="10.5" ry="4" fill="#b98a1e"/><rect x="12.5" y="18.0" width="21.0" height="3" fill="#b98a1e"/><ellipse cx="23" cy="18.0" rx="10.5" ry="4" fill="#f1cc4a" stroke="#b98a1e" stroke-width="0.8"/><ellipse cx="23" cy="16.2" rx="10.5" ry="4" fill="#b98a1e"/><rect x="12.5" y="13.2" width="21.0" height="3" fill="#b98a1e"/><ellipse cx="23" cy="13.2" rx="10.5" ry="4" fill="#f1cc4a" stroke="#b98a1e" stroke-width="0.8"/><ellipse cx="23" cy="11.4" rx="10.5" ry="4" fill="#b98a1e"/><rect x="12.5" y="8.4" width="21.0" height="3" fill="#b98a1e"/><ellipse cx="23" cy="8.4" rx="10.5" ry="4" fill="#f1cc4a" stroke="#b98a1e" stroke-width="0.8"/><ellipse cx="23" cy="6.600000000000001" rx="10.5" ry="4" fill="#b98a1e"/><rect x="12.5" y="3.6000000000000014" width="21.0" height="3" fill="#b98a1e"/><ellipse cx="23" cy="3.6000000000000014" rx="10.5" ry="4" fill="#f1cc4a" stroke="#b98a1e" stroke-width="0.8"/><ellipse cx="12" cy="27.0" rx="10.5" ry="4" fill="#b98a1e"/><rect x="1.5" y="24.0" width="21.0" height="3" fill="#b98a1e"/><ellipse cx="12" cy="24.0" rx="10.5" ry="4" fill="#f1cc4a" stroke="#b98a1e" stroke-width="0.8"/><ellipse cx="12" cy="22.2" rx="10.5" ry="4" fill="#b98a1e"/><rect x="1.5" y="19.2" width="21.0" height="3" fill="#b98a1e"/><ellipse cx="12" cy="19.2" rx="10.5" ry="4" fill="#f1cc4a" stroke="#b98a1e" stroke-width="0.8"/><ellipse cx="12" cy="17.4" rx="10.5" ry="4" fill="#b98a1e"/><rect x="1.5" y="14.4" width="21.0" height="3" fill="#b98a1e"/><ellipse cx="12" cy="14.4" rx="10.5" ry="4" fill="#f1cc4a" stroke="#b98a1e" stroke-width="0.8"/></svg>
<svg style="position:absolute;left:1359.9px;top:179.95px;" width="9" height="7.5" viewBox="0 0 9 7.5"><path d="M0 0 L9 0 L4.5 7.5 Z" fill="#5e5e5e"/></svg>
<div class="t" style="left:1390.0px;top:171.62px;font-size:27.62px;color:#3a3a3a;letter-spacing:-2.463px;">%</div>
<div class="t" style="left:1437.5px;top:173.44px;font-size:19.33px;color:#3a3a3a;letter-spacing:-0.625px;">000</div>
<div style="position:absolute;left:1490.9px;top:163.2px;width:102.59999999999991px;height:38.5px;border:1.5px solid #bcbcbc;border-radius:6px;background:linear-gradient(#f9f9f9,#ececec);overflow:hidden;"></div>
<div style="position:absolute;left:1543.7px;top:164.2px;width:1px;height:39.5px;background:#cacaca;"></div>
<svg style="position:absolute;left:1500px;top:168px;" width="40" height="34" viewBox="0 0 40 34"><path d="M0 7.5 L7 1.5 V5 H13 V10 H7 V13.5 Z" fill="#2f7ed8"/><text x="14" y="14" font-family="Liberation Sans" font-size="17" stroke="#333" stroke-width="0.4" fill="#333">,0</text><text x="9" y="29" font-family="Liberation Sans" font-size="17" stroke="#333" stroke-width="0.4" fill="#333">,00</text></svg>
<svg style="position:absolute;left:1550px;top:168px;" width="40" height="34" viewBox="0 0 40 34"><text x="8" y="14" font-family="Liberation Sans" font-size="17" stroke="#333" stroke-width="0.4" fill="#333">,00</text><path d="M17 23 L10 17 V20.5 H3 V25.5 H10 V29 Z" fill="#2f7ed8"/><text x="17" y="29" font-family="Liberation Sans" font-size="17" stroke="#333" stroke-width="0.4" fill="#333">,0</text></svg>
<div style="position:absolute;left:1611.9px;top:100px;width:2px;height:113px;background:#e2e2e2;"></div>
<svg style="position:absolute;left:1657px;top:112px;" width="56" height="50" viewBox="0 0 56 50"><rect x="0.5" y="0.5" width="47.2" height="43.2" fill="#fff"/><rect x="12.3" y="0.5" width="11.8" height="10.8" fill="#e3696f"/><rect x="12.3" y="11.3" width="21.2" height="10.8" fill="#4e93dc"/><rect x="12.3" y="22.1" width="26.0" height="10.8" fill="#e3696f"/><rect x="12.3" y="32.9" width="11.8" height="10.8" fill="#4e93dc"/><path d="M0.5 0.5 V43.7" stroke="#bdbdbd" stroke-width="1"/><path d="M12.3 0.5 V43.7" stroke="#bdbdbd" stroke-width="1"/><path d="M24.1 0.5 V43.7" stroke="#bdbdbd" stroke-width="1"/><path d="M35.9 0.5 V43.7" stroke="#bdbdbd" stroke-width="1"/><path d="M47.7 0.5 V43.7" stroke="#bdbdbd" stroke-width="1"/><path d="M0.5 0.5 H47.7" stroke="#bdbdbd" stroke-width="1"/><path d="M0.5 11.3 H47.7" stroke="#bdbdbd" stroke-width="1"/><path d="M0.5 22.1 H47.7" stroke="#bdbdbd" stroke-width="1"/><path d="M0.5 32.9 H47.7" stroke="#bdbdbd" stroke-width="1"/><path d="M0.5 43.7 H47.7" stroke="#bdbdbd" stroke-width="1"/><rect x="26.5" y="25.5" width="26" height="23" fill="#fff" stroke="#a0a0a0" stroke-width="1"/><path d="M32.5 34 H46.5 M32.5 40 H46.5 M35.5 45.5 L43.5 29" stroke="#2a2a2a" stroke-width="1.9"/></svg>
<svg style="position:absolute;left:1718.05px;top:130.25px;" width="9.5" height="7.5" viewBox="0 0 9.5 7.5"><path d="M0 0 L9.5 0 L4.75 7.5 Z" fill="#5e5e5e"/></svg>
<svg style="position:absolute;left:1783px;top:113px;" width="60" height="52" viewBox="0 0 60 52"><rect x="0.5" y="0.5" width="47.4" height="39.6" fill="#fff"/><rect x="12.3" y="10.4" width="35.5" height="29.7" fill="#cfe1f5"/><path d="M0.5 0.5 V40.1" stroke="#c2c2c2" stroke-width="1"/><path d="M12.3 0.5 V40.1" stroke="#c2c2c2" stroke-width="1"/><path d="M24.2 0.5 V40.1" stroke="#c2c2c2" stroke-width="1"/><path d="M36.0 0.5 V40.1" stroke="#c2c2c2" stroke-width="1"/><path d="M47.9 0.5 V40.1" stroke="#c2c2c2" stroke-width="1"/><path d="M0.5 0.5 H47.9" stroke="#c2c2c2" stroke-width="1"/><path d="M0.5 10.4 H47.9" stroke="#c2c2c2" stroke-width="1"/><path d="M0.5 20.3 H47.9" stroke="#c2c2c2" stroke-width="1"/><path d="M0.5 30.2 H47.9" stroke="#c2c2c2" stroke-width="1"/><path d="M0.5 40.1 H47.9" stroke="#c2c2c2" stroke-width="1"/><g transform="translate(10,1)"><path d="M11 47.5 Q2 49 0 47 Q7 44 9.5 38 Q12 32 18 34 Q23 37 20 43 Q17 47 11 47.5 Z" fill="#2f7ad8"/><path d="M12 37 Q14 30 20 30 Q26 31 26 36.5 Q26 41 21.5 43 Q16 45 13.5 42 Q11.5 40 12 37 Z" fill="#e0a34f" stroke="#b9833d" stroke-width="0.6"/><path d="M20 31.5 L42 6.5 Q45.5 3 47.5 4.5 Q49.5 6.5 47 10 L25 37 Z" fill="#efefef" stroke="#a5a5a5" stroke-width="0.9"/><path d="M22 33 L44 7.5" stroke="#fff" stroke-width="1.6"/></g></svg>
<svg style="position:absolute;left:1846.55px;top:130.25px;" width="9.5" height="7.5" viewBox="0 0 9.5 7.5"><path d="M0 0 L9.5 0 L4.75 7.5 Z" fill="#5e5e5e"/></svg>
<svg style="position:absolute;left:1946px;top:113px;" width="60" height="52" viewBox="0 0 60 52"><rect x="0.5" y="0.5" width="47" height="39.5" fill="#fff" stroke="#c2c2c2" stroke-width="1"/><rect x="9.5" y="9.5" width="31" height="23" fill="#c9ddf4"/><path d="M0.5 9 H47.5 M0.5 33 H47.5 M9 0.5 V40 M40.5 0.5 V40" stroke="#c2c2c2" stroke-width="1"/><g transform="translate(10,1)"><path d="M11 47.5 Q2 49 0 47 Q7 44 9.5 38 Q12 32 18 34 Q23 37 20 43 Q17 47 11 47.5 Z" fill="#2f7ad8"/><path d="M12 37 Q14 30 20 30 Q26 31 26 36.5 Q26 41 21.5 43 Q16 45 13.5 42 Q11.5 40 12 37 Z" fill="#e0a34f" stroke="#b9833d" stroke-width="0.6"/><path d="M20 31.5 L42 6.5 Q45.5 3 47.5 4.5 Q49.5 6.5 47 10 L25 37 Z" fill="#efefef" stroke="#a5a5a5" stroke-width="0.9"/><path d="M22 33 L44 7.5" stroke="#fff" stroke-width="1.6"/></g></svg>
<svg style="position:absolute;left:2009.45px;top:130.05px;" width="9.5" height="7.5" viewBox="0 0 9.5 7.5"><path d="M0 0 L9.5 0 L4.75 7.5 Z" fill="#5e5e5e"/></svg>
<div style="position:absolute;left:2099.4px;top:100px;width:2px;height:113px;background:#e2e2e2;"></div>
<svg style="position:absolute;left:2122px;top:99px;" width="40" height="32" viewBox="0 0 40 32"><rect x="13.3" y="2.3" width="17.5" height="26.1" rx="1" fill="#fff" stroke="#8e8e8e" stroke-width="1.2"/><path d="M22.4 2.3 V28.4 M13.3 22.5 H30.8" stroke="#b5b5b5" stroke-width="1"/><rect x="15.8" y="8.2" width="20.1" height="8.4" rx="1.5" fill="#55ad55" stroke="#3f9640" stroke-width="0.8"/><path d="M22.4 8.2 V16.6" stroke="#3f9640" stroke-width="0.8"/><path d="M2.7 12.4 L8.7 6.1 V9.3 H14 V15.5 H8.7 V18.7 Z" fill="#55ad55"/></svg>
<svg style="position:absolute;left:2258.5px;top:109.95px;" width="9" height="7.5" viewBox="0 0 9 7.5"><path d="M0 0 L9 0 L4.5 7.5 Z" fill="#5e5e5e"/></svg>
<svg style="position:absolute;left:2122px;top:141px;" width="40" height="32" viewBox="0 0 40 32"><rect x="7.4" y="2.2" width="18.3" height="26.4" rx="1" fill="#fff" stroke="#8e8e8e" stroke-width="1.2"/><path d="M16.6 2.2 V28.6 M7.4 22.7 H25.7" stroke="#b5b5b5" stroke-width="1"/><rect x="3" y="8.6" width="20" height="8.2" rx="1.5" fill="#e0474c" stroke="#c13a3e" stroke-width="0.8"/><path d="M13 8.6 V16.8" stroke="#c13a3e" stroke-width="0.8"/><path d="M27.6 9.3 L35.2 16.6 M35.2 9.3 L27.6 16.6" stroke="#e0474c" stroke-width="2.6"/></svg>
<svg style="position:absolute;left:2254.9px;top:152.25px;" width="9" height="7.5" viewBox="0 0 9 7.5"><path d="M0 0 L9 0 L4.5 7.5 Z" fill="#5e5e5e"/></svg>
<svg style="position:absolute;left:2124px;top:181px;" width="36" height="33" viewBox="0 0 36 33"><path d="M3.4 1.5 V6.5 M24.6 1.5 V6.5" stroke="#3a78c9" stroke-width="2"/><path d="M7 4 H21" stroke="#3a78c9" stroke-width="2"/><path d="M5.5 4 L9 1.2 V6.8 Z M22.5 4 L19 1.2 V6.8 Z" fill="#3a78c9"/><rect x="2.2" y="9.4" width="30.4" height="21.3" rx="1" fill="#fff" stroke="#8e8e8e" stroke-width="1.2"/><path d="M8.7 9.4 V30.7 M18.4 9.4 V30.7 M26.4 9.4 V30.7 M2.2 15.1 H32.6 M2.2 25.6 H32.6" stroke="#c8c8c8" stroke-width="1"/><rect x="8.3" y="15.1" width="10.6" height="10.5" fill="#3f7fcb"/></svg>
<svg style="position:absolute;left:2236.7px;top:194.75px;" width="9" height="7.5" viewBox="0 0 9 7.5"><path d="M0 0 L9 0 L4.5 7.5 Z" fill="#5e5e5e"/></svg>
<div style="position:absolute;left:2289.1px;top:100px;width:2px;height:113px;background:#e2e2e2;"></div>
<svg style="position:absolute;left:2320px;top:99px;" width="26" height="31" viewBox="0 0 26 31"><path d="M1 1 H24 V6 H9 L16 15 L9 24 H24 V29.5 H1 V25 L9.5 15 L1 5 Z" fill="#5c5c5c"/></svg>
<svg style="position:absolute;left:2359.0px;top:109.55px;" width="9" height="7.5" viewBox="0 0 9 7.5"><path d="M0 0 L9 0 L4.5 7.5 Z" fill="#5e5e5e"/></svg>
<svg style="position:absolute;left:2319px;top:142px;" width="26" height="29" viewBox="0 0 26 29"><rect x="1" y="1" width="23" height="27" rx="1" fill="#fff" stroke="#9a9a9a" stroke-width="1"/><rect x="1" y="1" width="23" height="4" fill="#b9b9b9"/><path d="M12.5 9 V17" stroke="#2f7ed8" stroke-width="3.5"/><path d="M5.5 15 H19.5 L12.5 22.5 Z" fill="#2f7ed8"/></svg>
<svg style="position:absolute;left:2353.4px;top:152.35px;" width="9" height="7.5" viewBox="0 0 9 7.5"><path d="M0 0 L9 0 L4.5 7.5 Z" fill="#5e5e5e"/></svg>
<svg style="position:absolute;left:2316px;top:183px;" width="32" height="32" viewBox="0 0 32 32"><path d="M1 21 L17 3 Q20 0 23 2.5 L28.5 7.5 Q31 10 28 13.5 L13 30 Q10 32 7.5 30 L2 25 Q-0.5 23 1 21 Z" fill="#e58ea0"/><path d="M1 21 L17 3 Q20 0 23 2.5 L25 4.5 L8 23.5 Q6 25 4 23.5 Z" fill="#f3b5c1"/><path d="M8 23.5 L13 28" stroke="#c96379" stroke-width="1"/></svg>
<svg style="position:absolute;left:2353.4px;top:194.75px;" width="9" height="7.5" viewBox="0 0 9 7.5"><path d="M0 0 L9 0 L4.5 7.5 Z" fill="#5e5e5e"/></svg>
<div class="t" style="left:2395.5px;top:108.14px;font-size:28.78px;color:#2f7ed8;font-weight:700;letter-spacing:-0.581px;-webkit-text-stroke:0;">A</div>
<div class="t" style="left:2397.5px;top:131.89px;font-size:29.07px;color:#666;font-weight:700;letter-spacing:-1.766px;-webkit-text-stroke:0;">Z</div>
<svg style="position:absolute;left:2418px;top:117px;" width="36" height="36" viewBox="0 0 36 36"><path d="M1 6 Q1 0 17.5 0 Q34 0 34 6 Q34 9 25 17 L21 21 V35 Q17.5 38 14 35 V21 L10 17 Q1 9 1 6 Z" fill="#8c8c8c"/><ellipse cx="17.5" cy="5" rx="14" ry="3.5" fill="#d8d8d8"/></svg>
<svg style="position:absolute;left:2458.2px;top:130.05px;" width="9" height="7.5" viewBox="0 0 9 7.5"><path d="M0 0 L9 0 L4.5 7.5 Z" fill="#5e5e5e"/></svg>
<div style="position:absolute;left:0px;top:222px;width:154px;height:47px;background:#fff;"></div>
<div style="position:absolute;left:154px;top:222px;width:2px;height:47px;background:#a9a9a9;"></div>
<div style="position:absolute;left:156px;top:222px;width:1px;height:47px;background:#d7d7d7;"></div>
<div class="t" style="left:17.5px;top:235.48px;font-size:24.71px;color:#1a1a1a;letter-spacing:-1.119px;">A1</div>
<svg style="position:absolute;left:133.7px;top:230px;" width="12.7" height="9.6" viewBox="0 0 12.7 9.6"><path d="M0 9.6 L12.7 9.6 L6.35 0 Z" fill="#6b6b6b"/></svg>
<svg style="position:absolute;left:133.7px;top:251.2px;" width="12.7" height="9.2" viewBox="0 0 12.7 9.2"><path d="M0 0 L12.7 0 L6.35 9.2 Z" fill="#6b6b6b"/></svg>
<div style="position:absolute;left:0px;top:222px;width:2px;height:47px;background:#b5b5b5;"></div>
<svg style="position:absolute;left:182px;top:236px;" width="23" height="21" viewBox="0 0 23 21"><path d="M2.5 2.5 L19.5 18.5 M19.5 2.5 L2.5 18.5" stroke="#c6c6c6" stroke-width="3.4" stroke-linecap="round"/></svg>
<svg style="position:absolute;left:233px;top:237px;" width="29" height="21" viewBox="0 0 29 21"><path d="M2.5 10 L9.5 17 L25.5 2.5" fill="none" stroke="#c6c6c6" stroke-width="3.4" stroke-linecap="round" stroke-linejoin="round"/></svg>
<div class="t" style="left:287.5px;top:229.77px;font-size:29.8px;color:#3a3a3a;font-style:italic;font-family:'Liberation Serif',serif;-webkit-text-stroke:0.2px;">fx</div>
<div style="position:absolute;left:329.5px;top:232px;width:1.5px;height:31px;background:#d6d6d6;"></div>
<div class="t" style="left:344.5px;top:234.68px;font-size:24.71px;color:#1a1a1a;letter-spacing:-0.789px;">Nr.</div>
<svg style="position:absolute;left:2479.2px;top:239.4px;" width="13" height="10" viewBox="0 0 13 10"><path d="M0 0 L13 0 L6.5 10 Z" fill="#555"/></svg>
<svg style="position:absolute;left:26.8px;top:1423.3px;" width="15" height="17" viewBox="0 0 15 17"><path d="M14.2 0 V17 L0 8.5 Z" fill="#a0a0a0"/></svg>
<svg style="position:absolute;left:69.2px;top:1423.3px;" width="15" height="17" viewBox="0 0 15 17"><path d="M0 0 V17 L13.3 8.5 Z" fill="#a0a0a0"/></svg>
<svg style="position:absolute;left:297px;top:1420px;" width="22" height="22" viewBox="0 0 22 22"><path d="M10.5 1.5 V19.5 M1.5 10.5 H19.5" stroke="#555" stroke-width="3.2"/></svg>
<svg style="position:absolute;left:1939.5px;top:1463.5px;" width="27" height="26" viewBox="0 0 27 26"><rect x="1.5" y="1.5" width="22" height="22" rx="1.5" fill="none" stroke="#ffffff" stroke-width="2.2"/><path d="M8.8 1.5 V23.5 M16.2 1.5 V23.5 M1.5 8.8 H23.5 M1.5 16.2 H23.5" stroke="#ffffff" stroke-width="2"/></svg>
<svg style="position:absolute;left:2004.5px;top:1463.5px;" width="28" height="26" viewBox="0 0 28 26"><rect x="1.5" y="1.5" width="23" height="22" rx="1.5" fill="none" stroke="#ffffff" stroke-width="2.2"/><rect x="6.8" y="5.3" width="13" height="14.6" fill="none" stroke="#ffffff" stroke-width="2"/><path d="M10.2 9.3 H17 M10.2 13 H17 M10.2 16.7 H17" stroke="#ffffff" stroke-width="1.6"/></svg>
<svg style="position:absolute;left:2069.5px;top:1463.5px;" width="28" height="26" viewBox="0 0 28 26"><rect x="1.5" y="1.5" width="23" height="22" rx="1.5" fill="none" stroke="#ffffff" stroke-width="2.2"/><path d="M7.9 1.5 V15 M15.9 1.5 V15 M1.5 15 H16.9" fill="none" stroke="#ffffff" stroke-width="2"/></svg>
<div style="position:absolute;left:2130px;top:1475px;width:15px;height:3.5px;background:#fff;"></div>
<div style="position:absolute;left:2160px;top:1472.5px;width:179px;height:7px;border-radius:4px;background:#17542f;"></div>
<div style="position:absolute;left:2239px;top:1466px;width:20px;height:20px;border-radius:50%;background:#fff;box-shadow:0 0.5px 1px rgba(0,0,0,.4);"></div>
<svg style="position:absolute;left:2353px;top:1468px;" width="16" height="16" viewBox="0 0 16 16"><path d="M7.7 1 V14.5 M1 7.7 H14.5" stroke="#fff" stroke-width="3.2"/></svg></body></html>
